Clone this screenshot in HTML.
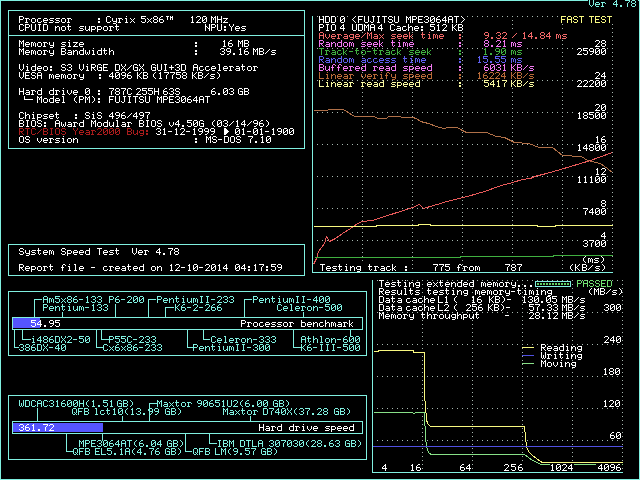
<!DOCTYPE html><html><head><meta charset="utf-8"><style>html,body{margin:0;padding:0;background:#000;width:640px;height:480px;overflow:hidden}svg{display:block;will-change:transform}text{font-family:"Liberation Mono",monospace;white-space:pre}</style></head><body>
<svg width="640" height="480" viewBox="0 0 640 480">
<rect x="0" y="0" width="640" height="480" fill="#000"/>
<path d="M312 16h1v1h-1zM317 16h1v1h-1zM322 16h1v1h-1zM327 16h1v1h-1zM332 16h1v1h-1zM337 16h1v1h-1zM342 16h1v1h-1zM347 16h1v1h-1zM352 16h1v1h-1zM357 16h1v1h-1zM362 16h1v1h-1zM367 16h1v1h-1zM372 16h1v1h-1zM377 16h1v1h-1zM382 16h1v1h-1zM387 16h1v1h-1zM392 16h1v1h-1zM397 16h1v1h-1zM402 16h1v1h-1zM407 16h1v1h-1zM412 16h1v1h-1zM417 16h1v1h-1zM422 16h1v1h-1zM427 16h1v1h-1zM432 16h1v1h-1zM437 16h1v1h-1zM442 16h1v1h-1zM447 16h1v1h-1zM452 16h1v1h-1zM457 16h1v1h-1zM462 16h1v1h-1zM467 16h1v1h-1zM472 16h1v1h-1zM477 16h1v1h-1zM482 16h1v1h-1zM487 16h1v1h-1zM492 16h1v1h-1zM497 16h1v1h-1zM502 16h1v1h-1zM507 16h1v1h-1zM512 16h1v1h-1zM517 16h1v1h-1zM522 16h1v1h-1zM527 16h1v1h-1zM532 16h1v1h-1zM537 16h1v1h-1zM542 16h1v1h-1zM547 16h1v1h-1zM552 16h1v1h-1zM557 16h1v1h-1zM562 16h1v1h-1zM567 16h1v1h-1zM572 16h1v1h-1zM577 16h1v1h-1zM582 16h1v1h-1zM587 16h1v1h-1zM592 16h1v1h-1zM597 16h1v1h-1zM602 16h1v1h-1zM607 16h1v1h-1zM612 16h1v1h-1zM312 48h1v1h-1zM317 48h1v1h-1zM322 48h1v1h-1zM327 48h1v1h-1zM332 48h1v1h-1zM337 48h1v1h-1zM342 48h1v1h-1zM347 48h1v1h-1zM352 48h1v1h-1zM357 48h1v1h-1zM362 48h1v1h-1zM367 48h1v1h-1zM372 48h1v1h-1zM377 48h1v1h-1zM382 48h1v1h-1zM387 48h1v1h-1zM392 48h1v1h-1zM397 48h1v1h-1zM402 48h1v1h-1zM407 48h1v1h-1zM412 48h1v1h-1zM417 48h1v1h-1zM422 48h1v1h-1zM427 48h1v1h-1zM432 48h1v1h-1zM437 48h1v1h-1zM442 48h1v1h-1zM447 48h1v1h-1zM452 48h1v1h-1zM457 48h1v1h-1zM462 48h1v1h-1zM467 48h1v1h-1zM472 48h1v1h-1zM477 48h1v1h-1zM482 48h1v1h-1zM487 48h1v1h-1zM492 48h1v1h-1zM497 48h1v1h-1zM502 48h1v1h-1zM507 48h1v1h-1zM512 48h1v1h-1zM517 48h1v1h-1zM522 48h1v1h-1zM527 48h1v1h-1zM532 48h1v1h-1zM537 48h1v1h-1zM542 48h1v1h-1zM547 48h1v1h-1zM552 48h1v1h-1zM557 48h1v1h-1zM562 48h1v1h-1zM567 48h1v1h-1zM572 48h1v1h-1zM577 48h1v1h-1zM582 48h1v1h-1zM587 48h1v1h-1zM592 48h1v1h-1zM597 48h1v1h-1zM602 48h1v1h-1zM607 48h1v1h-1zM612 48h1v1h-1zM312 80h1v1h-1zM317 80h1v1h-1zM322 80h1v1h-1zM327 80h1v1h-1zM332 80h1v1h-1zM337 80h1v1h-1zM342 80h1v1h-1zM347 80h1v1h-1zM352 80h1v1h-1zM357 80h1v1h-1zM362 80h1v1h-1zM367 80h1v1h-1zM372 80h1v1h-1zM377 80h1v1h-1zM382 80h1v1h-1zM387 80h1v1h-1zM392 80h1v1h-1zM397 80h1v1h-1zM402 80h1v1h-1zM407 80h1v1h-1zM412 80h1v1h-1zM417 80h1v1h-1zM422 80h1v1h-1zM427 80h1v1h-1zM432 80h1v1h-1zM437 80h1v1h-1zM442 80h1v1h-1zM447 80h1v1h-1zM452 80h1v1h-1zM457 80h1v1h-1zM462 80h1v1h-1zM467 80h1v1h-1zM472 80h1v1h-1zM477 80h1v1h-1zM482 80h1v1h-1zM487 80h1v1h-1zM492 80h1v1h-1zM497 80h1v1h-1zM502 80h1v1h-1zM507 80h1v1h-1zM512 80h1v1h-1zM517 80h1v1h-1zM522 80h1v1h-1zM527 80h1v1h-1zM532 80h1v1h-1zM537 80h1v1h-1zM542 80h1v1h-1zM547 80h1v1h-1zM552 80h1v1h-1zM557 80h1v1h-1zM562 80h1v1h-1zM567 80h1v1h-1zM572 80h1v1h-1zM577 80h1v1h-1zM582 80h1v1h-1zM587 80h1v1h-1zM592 80h1v1h-1zM597 80h1v1h-1zM602 80h1v1h-1zM607 80h1v1h-1zM612 80h1v1h-1zM312 112h1v1h-1zM317 112h1v1h-1zM322 112h1v1h-1zM327 112h1v1h-1zM332 112h1v1h-1zM337 112h1v1h-1zM342 112h1v1h-1zM347 112h1v1h-1zM352 112h1v1h-1zM357 112h1v1h-1zM362 112h1v1h-1zM367 112h1v1h-1zM372 112h1v1h-1zM377 112h1v1h-1zM382 112h1v1h-1zM387 112h1v1h-1zM392 112h1v1h-1zM397 112h1v1h-1zM402 112h1v1h-1zM407 112h1v1h-1zM412 112h1v1h-1zM417 112h1v1h-1zM422 112h1v1h-1zM427 112h1v1h-1zM432 112h1v1h-1zM437 112h1v1h-1zM442 112h1v1h-1zM447 112h1v1h-1zM452 112h1v1h-1zM457 112h1v1h-1zM462 112h1v1h-1zM467 112h1v1h-1zM472 112h1v1h-1zM477 112h1v1h-1zM482 112h1v1h-1zM487 112h1v1h-1zM492 112h1v1h-1zM497 112h1v1h-1zM502 112h1v1h-1zM507 112h1v1h-1zM512 112h1v1h-1zM517 112h1v1h-1zM522 112h1v1h-1zM527 112h1v1h-1zM532 112h1v1h-1zM537 112h1v1h-1zM542 112h1v1h-1zM547 112h1v1h-1zM552 112h1v1h-1zM557 112h1v1h-1zM562 112h1v1h-1zM567 112h1v1h-1zM572 112h1v1h-1zM577 112h1v1h-1zM582 112h1v1h-1zM587 112h1v1h-1zM592 112h1v1h-1zM597 112h1v1h-1zM602 112h1v1h-1zM607 112h1v1h-1zM612 112h1v1h-1zM312 144h1v1h-1zM317 144h1v1h-1zM322 144h1v1h-1zM327 144h1v1h-1zM332 144h1v1h-1zM337 144h1v1h-1zM342 144h1v1h-1zM347 144h1v1h-1zM352 144h1v1h-1zM357 144h1v1h-1zM362 144h1v1h-1zM367 144h1v1h-1zM372 144h1v1h-1zM377 144h1v1h-1zM382 144h1v1h-1zM387 144h1v1h-1zM392 144h1v1h-1zM397 144h1v1h-1zM402 144h1v1h-1zM407 144h1v1h-1zM412 144h1v1h-1zM417 144h1v1h-1zM422 144h1v1h-1zM427 144h1v1h-1zM432 144h1v1h-1zM437 144h1v1h-1zM442 144h1v1h-1zM447 144h1v1h-1zM452 144h1v1h-1zM457 144h1v1h-1zM462 144h1v1h-1zM467 144h1v1h-1zM472 144h1v1h-1zM477 144h1v1h-1zM482 144h1v1h-1zM487 144h1v1h-1zM492 144h1v1h-1zM497 144h1v1h-1zM502 144h1v1h-1zM507 144h1v1h-1zM512 144h1v1h-1zM517 144h1v1h-1zM522 144h1v1h-1zM527 144h1v1h-1zM532 144h1v1h-1zM537 144h1v1h-1zM542 144h1v1h-1zM547 144h1v1h-1zM552 144h1v1h-1zM557 144h1v1h-1zM562 144h1v1h-1zM567 144h1v1h-1zM572 144h1v1h-1zM577 144h1v1h-1zM582 144h1v1h-1zM587 144h1v1h-1zM592 144h1v1h-1zM597 144h1v1h-1zM602 144h1v1h-1zM607 144h1v1h-1zM612 144h1v1h-1zM312 176h1v1h-1zM317 176h1v1h-1zM322 176h1v1h-1zM327 176h1v1h-1zM332 176h1v1h-1zM337 176h1v1h-1zM342 176h1v1h-1zM347 176h1v1h-1zM352 176h1v1h-1zM357 176h1v1h-1zM362 176h1v1h-1zM367 176h1v1h-1zM372 176h1v1h-1zM377 176h1v1h-1zM382 176h1v1h-1zM387 176h1v1h-1zM392 176h1v1h-1zM397 176h1v1h-1zM402 176h1v1h-1zM407 176h1v1h-1zM412 176h1v1h-1zM417 176h1v1h-1zM422 176h1v1h-1zM427 176h1v1h-1zM432 176h1v1h-1zM437 176h1v1h-1zM442 176h1v1h-1zM447 176h1v1h-1zM452 176h1v1h-1zM457 176h1v1h-1zM462 176h1v1h-1zM467 176h1v1h-1zM472 176h1v1h-1zM477 176h1v1h-1zM482 176h1v1h-1zM487 176h1v1h-1zM492 176h1v1h-1zM497 176h1v1h-1zM502 176h1v1h-1zM507 176h1v1h-1zM512 176h1v1h-1zM517 176h1v1h-1zM522 176h1v1h-1zM527 176h1v1h-1zM532 176h1v1h-1zM537 176h1v1h-1zM542 176h1v1h-1zM547 176h1v1h-1zM552 176h1v1h-1zM557 176h1v1h-1zM562 176h1v1h-1zM567 176h1v1h-1zM572 176h1v1h-1zM577 176h1v1h-1zM582 176h1v1h-1zM587 176h1v1h-1zM592 176h1v1h-1zM597 176h1v1h-1zM602 176h1v1h-1zM607 176h1v1h-1zM612 176h1v1h-1zM312 208h1v1h-1zM317 208h1v1h-1zM322 208h1v1h-1zM327 208h1v1h-1zM332 208h1v1h-1zM337 208h1v1h-1zM342 208h1v1h-1zM347 208h1v1h-1zM352 208h1v1h-1zM357 208h1v1h-1zM362 208h1v1h-1zM367 208h1v1h-1zM372 208h1v1h-1zM377 208h1v1h-1zM382 208h1v1h-1zM387 208h1v1h-1zM392 208h1v1h-1zM397 208h1v1h-1zM402 208h1v1h-1zM407 208h1v1h-1zM412 208h1v1h-1zM417 208h1v1h-1zM422 208h1v1h-1zM427 208h1v1h-1zM432 208h1v1h-1zM437 208h1v1h-1zM442 208h1v1h-1zM447 208h1v1h-1zM452 208h1v1h-1zM457 208h1v1h-1zM462 208h1v1h-1zM467 208h1v1h-1zM472 208h1v1h-1zM477 208h1v1h-1zM482 208h1v1h-1zM487 208h1v1h-1zM492 208h1v1h-1zM497 208h1v1h-1zM502 208h1v1h-1zM507 208h1v1h-1zM512 208h1v1h-1zM517 208h1v1h-1zM522 208h1v1h-1zM527 208h1v1h-1zM532 208h1v1h-1zM537 208h1v1h-1zM542 208h1v1h-1zM547 208h1v1h-1zM552 208h1v1h-1zM557 208h1v1h-1zM562 208h1v1h-1zM567 208h1v1h-1zM572 208h1v1h-1zM577 208h1v1h-1zM582 208h1v1h-1zM587 208h1v1h-1zM592 208h1v1h-1zM597 208h1v1h-1zM602 208h1v1h-1zM607 208h1v1h-1zM612 208h1v1h-1zM312 240h1v1h-1zM317 240h1v1h-1zM322 240h1v1h-1zM327 240h1v1h-1zM332 240h1v1h-1zM337 240h1v1h-1zM342 240h1v1h-1zM347 240h1v1h-1zM352 240h1v1h-1zM357 240h1v1h-1zM362 240h1v1h-1zM367 240h1v1h-1zM372 240h1v1h-1zM377 240h1v1h-1zM382 240h1v1h-1zM387 240h1v1h-1zM392 240h1v1h-1zM397 240h1v1h-1zM402 240h1v1h-1zM407 240h1v1h-1zM412 240h1v1h-1zM417 240h1v1h-1zM422 240h1v1h-1zM427 240h1v1h-1zM432 240h1v1h-1zM437 240h1v1h-1zM442 240h1v1h-1zM447 240h1v1h-1zM452 240h1v1h-1zM457 240h1v1h-1zM462 240h1v1h-1zM467 240h1v1h-1zM472 240h1v1h-1zM477 240h1v1h-1zM482 240h1v1h-1zM487 240h1v1h-1zM492 240h1v1h-1zM497 240h1v1h-1zM502 240h1v1h-1zM507 240h1v1h-1zM512 240h1v1h-1zM517 240h1v1h-1zM522 240h1v1h-1zM527 240h1v1h-1zM532 240h1v1h-1zM537 240h1v1h-1zM542 240h1v1h-1zM547 240h1v1h-1zM552 240h1v1h-1zM557 240h1v1h-1zM562 240h1v1h-1zM567 240h1v1h-1zM572 240h1v1h-1zM577 240h1v1h-1zM582 240h1v1h-1zM587 240h1v1h-1zM592 240h1v1h-1zM597 240h1v1h-1zM602 240h1v1h-1zM607 240h1v1h-1zM612 240h1v1h-1zM362 16h1v1h-1zM362 20h1v1h-1zM362 24h1v1h-1zM362 28h1v1h-1zM362 32h1v1h-1zM362 36h1v1h-1zM362 40h1v1h-1zM362 44h1v1h-1zM362 48h1v1h-1zM362 52h1v1h-1zM362 56h1v1h-1zM362 60h1v1h-1zM362 64h1v1h-1zM362 68h1v1h-1zM362 72h1v1h-1zM362 76h1v1h-1zM362 80h1v1h-1zM362 84h1v1h-1zM362 88h1v1h-1zM362 92h1v1h-1zM362 96h1v1h-1zM362 100h1v1h-1zM362 104h1v1h-1zM362 108h1v1h-1zM362 112h1v1h-1zM362 116h1v1h-1zM362 120h1v1h-1zM362 124h1v1h-1zM362 128h1v1h-1zM362 132h1v1h-1zM362 136h1v1h-1zM362 140h1v1h-1zM362 144h1v1h-1zM362 148h1v1h-1zM362 152h1v1h-1zM362 156h1v1h-1zM362 160h1v1h-1zM362 164h1v1h-1zM362 168h1v1h-1zM362 172h1v1h-1zM362 176h1v1h-1zM362 180h1v1h-1zM362 184h1v1h-1zM362 188h1v1h-1zM362 192h1v1h-1zM362 196h1v1h-1zM362 200h1v1h-1zM362 204h1v1h-1zM362 208h1v1h-1zM362 212h1v1h-1zM362 216h1v1h-1zM362 220h1v1h-1zM362 224h1v1h-1zM362 228h1v1h-1zM362 232h1v1h-1zM362 236h1v1h-1zM362 240h1v1h-1zM362 244h1v1h-1zM362 248h1v1h-1zM362 252h1v1h-1zM362 256h1v1h-1zM362 260h1v1h-1zM362 264h1v1h-1zM362 268h1v1h-1zM412 16h1v1h-1zM412 20h1v1h-1zM412 24h1v1h-1zM412 28h1v1h-1zM412 32h1v1h-1zM412 36h1v1h-1zM412 40h1v1h-1zM412 44h1v1h-1zM412 48h1v1h-1zM412 52h1v1h-1zM412 56h1v1h-1zM412 60h1v1h-1zM412 64h1v1h-1zM412 68h1v1h-1zM412 72h1v1h-1zM412 76h1v1h-1zM412 80h1v1h-1zM412 84h1v1h-1zM412 88h1v1h-1zM412 92h1v1h-1zM412 96h1v1h-1zM412 100h1v1h-1zM412 104h1v1h-1zM412 108h1v1h-1zM412 112h1v1h-1zM412 116h1v1h-1zM412 120h1v1h-1zM412 124h1v1h-1zM412 128h1v1h-1zM412 132h1v1h-1zM412 136h1v1h-1zM412 140h1v1h-1zM412 144h1v1h-1zM412 148h1v1h-1zM412 152h1v1h-1zM412 156h1v1h-1zM412 160h1v1h-1zM412 164h1v1h-1zM412 168h1v1h-1zM412 172h1v1h-1zM412 176h1v1h-1zM412 180h1v1h-1zM412 184h1v1h-1zM412 188h1v1h-1zM412 192h1v1h-1zM412 196h1v1h-1zM412 200h1v1h-1zM412 204h1v1h-1zM412 208h1v1h-1zM412 212h1v1h-1zM412 216h1v1h-1zM412 220h1v1h-1zM412 224h1v1h-1zM412 228h1v1h-1zM412 232h1v1h-1zM412 236h1v1h-1zM412 240h1v1h-1zM412 244h1v1h-1zM412 248h1v1h-1zM412 252h1v1h-1zM412 256h1v1h-1zM412 260h1v1h-1zM412 264h1v1h-1zM412 268h1v1h-1zM462 16h1v1h-1zM462 20h1v1h-1zM462 24h1v1h-1zM462 28h1v1h-1zM462 32h1v1h-1zM462 36h1v1h-1zM462 40h1v1h-1zM462 44h1v1h-1zM462 48h1v1h-1zM462 52h1v1h-1zM462 56h1v1h-1zM462 60h1v1h-1zM462 64h1v1h-1zM462 68h1v1h-1zM462 72h1v1h-1zM462 76h1v1h-1zM462 80h1v1h-1zM462 84h1v1h-1zM462 88h1v1h-1zM462 92h1v1h-1zM462 96h1v1h-1zM462 100h1v1h-1zM462 104h1v1h-1zM462 108h1v1h-1zM462 112h1v1h-1zM462 116h1v1h-1zM462 120h1v1h-1zM462 124h1v1h-1zM462 128h1v1h-1zM462 132h1v1h-1zM462 136h1v1h-1zM462 140h1v1h-1zM462 144h1v1h-1zM462 148h1v1h-1zM462 152h1v1h-1zM462 156h1v1h-1zM462 160h1v1h-1zM462 164h1v1h-1zM462 168h1v1h-1zM462 172h1v1h-1zM462 176h1v1h-1zM462 180h1v1h-1zM462 184h1v1h-1zM462 188h1v1h-1zM462 192h1v1h-1zM462 196h1v1h-1zM462 200h1v1h-1zM462 204h1v1h-1zM462 208h1v1h-1zM462 212h1v1h-1zM462 216h1v1h-1zM462 220h1v1h-1zM462 224h1v1h-1zM462 228h1v1h-1zM462 232h1v1h-1zM462 236h1v1h-1zM462 240h1v1h-1zM462 244h1v1h-1zM462 248h1v1h-1zM462 252h1v1h-1zM462 256h1v1h-1zM462 260h1v1h-1zM462 264h1v1h-1zM462 268h1v1h-1zM512 16h1v1h-1zM512 20h1v1h-1zM512 24h1v1h-1zM512 28h1v1h-1zM512 32h1v1h-1zM512 36h1v1h-1zM512 40h1v1h-1zM512 44h1v1h-1zM512 48h1v1h-1zM512 52h1v1h-1zM512 56h1v1h-1zM512 60h1v1h-1zM512 64h1v1h-1zM512 68h1v1h-1zM512 72h1v1h-1zM512 76h1v1h-1zM512 80h1v1h-1zM512 84h1v1h-1zM512 88h1v1h-1zM512 92h1v1h-1zM512 96h1v1h-1zM512 100h1v1h-1zM512 104h1v1h-1zM512 108h1v1h-1zM512 112h1v1h-1zM512 116h1v1h-1zM512 120h1v1h-1zM512 124h1v1h-1zM512 128h1v1h-1zM512 132h1v1h-1zM512 136h1v1h-1zM512 140h1v1h-1zM512 144h1v1h-1zM512 148h1v1h-1zM512 152h1v1h-1zM512 156h1v1h-1zM512 160h1v1h-1zM512 164h1v1h-1zM512 168h1v1h-1zM512 172h1v1h-1zM512 176h1v1h-1zM512 180h1v1h-1zM512 184h1v1h-1zM512 188h1v1h-1zM512 192h1v1h-1zM512 196h1v1h-1zM512 200h1v1h-1zM512 204h1v1h-1zM512 208h1v1h-1zM512 212h1v1h-1zM512 216h1v1h-1zM512 220h1v1h-1zM512 224h1v1h-1zM512 228h1v1h-1zM512 232h1v1h-1zM512 236h1v1h-1zM512 240h1v1h-1zM512 244h1v1h-1zM512 248h1v1h-1zM512 252h1v1h-1zM512 256h1v1h-1zM512 260h1v1h-1zM512 264h1v1h-1zM512 268h1v1h-1zM562 16h1v1h-1zM562 20h1v1h-1zM562 24h1v1h-1zM562 28h1v1h-1zM562 32h1v1h-1zM562 36h1v1h-1zM562 40h1v1h-1zM562 44h1v1h-1zM562 48h1v1h-1zM562 52h1v1h-1zM562 56h1v1h-1zM562 60h1v1h-1zM562 64h1v1h-1zM562 68h1v1h-1zM562 72h1v1h-1zM562 76h1v1h-1zM562 80h1v1h-1zM562 84h1v1h-1zM562 88h1v1h-1zM562 92h1v1h-1zM562 96h1v1h-1zM562 100h1v1h-1zM562 104h1v1h-1zM562 108h1v1h-1zM562 112h1v1h-1zM562 116h1v1h-1zM562 120h1v1h-1zM562 124h1v1h-1zM562 128h1v1h-1zM562 132h1v1h-1zM562 136h1v1h-1zM562 140h1v1h-1zM562 144h1v1h-1zM562 148h1v1h-1zM562 152h1v1h-1zM562 156h1v1h-1zM562 160h1v1h-1zM562 164h1v1h-1zM562 168h1v1h-1zM562 172h1v1h-1zM562 176h1v1h-1zM562 180h1v1h-1zM562 184h1v1h-1zM562 188h1v1h-1zM562 192h1v1h-1zM562 196h1v1h-1zM562 200h1v1h-1zM562 204h1v1h-1zM562 208h1v1h-1zM562 212h1v1h-1zM562 216h1v1h-1zM562 220h1v1h-1zM562 224h1v1h-1zM562 228h1v1h-1zM562 232h1v1h-1zM562 236h1v1h-1zM562 240h1v1h-1zM562 244h1v1h-1zM562 248h1v1h-1zM562 252h1v1h-1zM562 256h1v1h-1zM562 260h1v1h-1zM562 264h1v1h-1zM562 268h1v1h-1zM612 16h1v1h-1zM612 20h1v1h-1zM612 24h1v1h-1zM612 28h1v1h-1zM612 32h1v1h-1zM612 36h1v1h-1zM612 40h1v1h-1zM612 44h1v1h-1zM612 48h1v1h-1zM612 52h1v1h-1zM612 56h1v1h-1zM612 60h1v1h-1zM612 64h1v1h-1zM612 68h1v1h-1zM612 72h1v1h-1zM612 76h1v1h-1zM612 80h1v1h-1zM612 84h1v1h-1zM612 88h1v1h-1zM612 92h1v1h-1zM612 96h1v1h-1zM612 100h1v1h-1zM612 104h1v1h-1zM612 108h1v1h-1zM612 112h1v1h-1zM612 116h1v1h-1zM612 120h1v1h-1zM612 124h1v1h-1zM612 128h1v1h-1zM612 132h1v1h-1zM612 136h1v1h-1zM612 140h1v1h-1zM612 144h1v1h-1zM612 148h1v1h-1zM612 152h1v1h-1zM612 156h1v1h-1zM612 160h1v1h-1zM612 164h1v1h-1zM612 168h1v1h-1zM612 172h1v1h-1zM612 176h1v1h-1zM612 180h1v1h-1zM612 184h1v1h-1zM612 188h1v1h-1zM612 192h1v1h-1zM612 196h1v1h-1zM612 200h1v1h-1zM612 204h1v1h-1zM612 208h1v1h-1zM612 212h1v1h-1zM612 216h1v1h-1zM612 220h1v1h-1zM612 224h1v1h-1zM612 228h1v1h-1zM612 232h1v1h-1zM612 236h1v1h-1zM612 240h1v1h-1zM612 244h1v1h-1zM612 248h1v1h-1zM612 252h1v1h-1zM612 256h1v1h-1zM612 260h1v1h-1zM612 264h1v1h-1zM612 268h1v1h-1zM372 280h1v1h-1zM377 280h1v1h-1zM382 280h1v1h-1zM387 280h1v1h-1zM392 280h1v1h-1zM397 280h1v1h-1zM402 280h1v1h-1zM407 280h1v1h-1zM412 280h1v1h-1zM417 280h1v1h-1zM422 280h1v1h-1zM427 280h1v1h-1zM432 280h1v1h-1zM437 280h1v1h-1zM442 280h1v1h-1zM447 280h1v1h-1zM452 280h1v1h-1zM457 280h1v1h-1zM462 280h1v1h-1zM467 280h1v1h-1zM472 280h1v1h-1zM477 280h1v1h-1zM482 280h1v1h-1zM487 280h1v1h-1zM492 280h1v1h-1zM497 280h1v1h-1zM502 280h1v1h-1zM507 280h1v1h-1zM512 280h1v1h-1zM517 280h1v1h-1zM522 280h1v1h-1zM527 280h1v1h-1zM532 280h1v1h-1zM537 280h1v1h-1zM542 280h1v1h-1zM547 280h1v1h-1zM552 280h1v1h-1zM557 280h1v1h-1zM562 280h1v1h-1zM567 280h1v1h-1zM572 280h1v1h-1zM577 280h1v1h-1zM582 280h1v1h-1zM587 280h1v1h-1zM592 280h1v1h-1zM597 280h1v1h-1zM602 280h1v1h-1zM607 280h1v1h-1zM612 280h1v1h-1zM617 280h1v1h-1zM622 280h1v1h-1zM372 312h1v1h-1zM377 312h1v1h-1zM382 312h1v1h-1zM387 312h1v1h-1zM392 312h1v1h-1zM397 312h1v1h-1zM402 312h1v1h-1zM407 312h1v1h-1zM412 312h1v1h-1zM417 312h1v1h-1zM422 312h1v1h-1zM427 312h1v1h-1zM432 312h1v1h-1zM437 312h1v1h-1zM442 312h1v1h-1zM447 312h1v1h-1zM452 312h1v1h-1zM457 312h1v1h-1zM462 312h1v1h-1zM467 312h1v1h-1zM472 312h1v1h-1zM477 312h1v1h-1zM482 312h1v1h-1zM487 312h1v1h-1zM492 312h1v1h-1zM497 312h1v1h-1zM502 312h1v1h-1zM507 312h1v1h-1zM512 312h1v1h-1zM517 312h1v1h-1zM522 312h1v1h-1zM527 312h1v1h-1zM532 312h1v1h-1zM537 312h1v1h-1zM542 312h1v1h-1zM547 312h1v1h-1zM552 312h1v1h-1zM557 312h1v1h-1zM562 312h1v1h-1zM567 312h1v1h-1zM572 312h1v1h-1zM577 312h1v1h-1zM582 312h1v1h-1zM587 312h1v1h-1zM592 312h1v1h-1zM597 312h1v1h-1zM602 312h1v1h-1zM607 312h1v1h-1zM612 312h1v1h-1zM617 312h1v1h-1zM622 312h1v1h-1zM372 344h1v1h-1zM377 344h1v1h-1zM382 344h1v1h-1zM387 344h1v1h-1zM392 344h1v1h-1zM397 344h1v1h-1zM402 344h1v1h-1zM407 344h1v1h-1zM412 344h1v1h-1zM417 344h1v1h-1zM422 344h1v1h-1zM427 344h1v1h-1zM432 344h1v1h-1zM437 344h1v1h-1zM442 344h1v1h-1zM447 344h1v1h-1zM452 344h1v1h-1zM457 344h1v1h-1zM462 344h1v1h-1zM467 344h1v1h-1zM472 344h1v1h-1zM477 344h1v1h-1zM482 344h1v1h-1zM487 344h1v1h-1zM492 344h1v1h-1zM497 344h1v1h-1zM502 344h1v1h-1zM507 344h1v1h-1zM512 344h1v1h-1zM517 344h1v1h-1zM522 344h1v1h-1zM527 344h1v1h-1zM532 344h1v1h-1zM537 344h1v1h-1zM542 344h1v1h-1zM547 344h1v1h-1zM552 344h1v1h-1zM557 344h1v1h-1zM562 344h1v1h-1zM567 344h1v1h-1zM572 344h1v1h-1zM577 344h1v1h-1zM582 344h1v1h-1zM587 344h1v1h-1zM592 344h1v1h-1zM597 344h1v1h-1zM602 344h1v1h-1zM607 344h1v1h-1zM612 344h1v1h-1zM617 344h1v1h-1zM622 344h1v1h-1zM372 376h1v1h-1zM377 376h1v1h-1zM382 376h1v1h-1zM387 376h1v1h-1zM392 376h1v1h-1zM397 376h1v1h-1zM402 376h1v1h-1zM407 376h1v1h-1zM412 376h1v1h-1zM417 376h1v1h-1zM422 376h1v1h-1zM427 376h1v1h-1zM432 376h1v1h-1zM437 376h1v1h-1zM442 376h1v1h-1zM447 376h1v1h-1zM452 376h1v1h-1zM457 376h1v1h-1zM462 376h1v1h-1zM467 376h1v1h-1zM472 376h1v1h-1zM477 376h1v1h-1zM482 376h1v1h-1zM487 376h1v1h-1zM492 376h1v1h-1zM497 376h1v1h-1zM502 376h1v1h-1zM507 376h1v1h-1zM512 376h1v1h-1zM517 376h1v1h-1zM522 376h1v1h-1zM527 376h1v1h-1zM532 376h1v1h-1zM537 376h1v1h-1zM542 376h1v1h-1zM547 376h1v1h-1zM552 376h1v1h-1zM557 376h1v1h-1zM562 376h1v1h-1zM567 376h1v1h-1zM572 376h1v1h-1zM577 376h1v1h-1zM582 376h1v1h-1zM587 376h1v1h-1zM592 376h1v1h-1zM597 376h1v1h-1zM602 376h1v1h-1zM607 376h1v1h-1zM612 376h1v1h-1zM617 376h1v1h-1zM622 376h1v1h-1zM372 408h1v1h-1zM377 408h1v1h-1zM382 408h1v1h-1zM387 408h1v1h-1zM392 408h1v1h-1zM397 408h1v1h-1zM402 408h1v1h-1zM407 408h1v1h-1zM412 408h1v1h-1zM417 408h1v1h-1zM422 408h1v1h-1zM427 408h1v1h-1zM432 408h1v1h-1zM437 408h1v1h-1zM442 408h1v1h-1zM447 408h1v1h-1zM452 408h1v1h-1zM457 408h1v1h-1zM462 408h1v1h-1zM467 408h1v1h-1zM472 408h1v1h-1zM477 408h1v1h-1zM482 408h1v1h-1zM487 408h1v1h-1zM492 408h1v1h-1zM497 408h1v1h-1zM502 408h1v1h-1zM507 408h1v1h-1zM512 408h1v1h-1zM517 408h1v1h-1zM522 408h1v1h-1zM527 408h1v1h-1zM532 408h1v1h-1zM537 408h1v1h-1zM542 408h1v1h-1zM547 408h1v1h-1zM552 408h1v1h-1zM557 408h1v1h-1zM562 408h1v1h-1zM567 408h1v1h-1zM572 408h1v1h-1zM577 408h1v1h-1zM582 408h1v1h-1zM587 408h1v1h-1zM592 408h1v1h-1zM597 408h1v1h-1zM602 408h1v1h-1zM607 408h1v1h-1zM612 408h1v1h-1zM617 408h1v1h-1zM622 408h1v1h-1zM372 440h1v1h-1zM377 440h1v1h-1zM382 440h1v1h-1zM387 440h1v1h-1zM392 440h1v1h-1zM397 440h1v1h-1zM402 440h1v1h-1zM407 440h1v1h-1zM412 440h1v1h-1zM417 440h1v1h-1zM422 440h1v1h-1zM427 440h1v1h-1zM432 440h1v1h-1zM437 440h1v1h-1zM442 440h1v1h-1zM447 440h1v1h-1zM452 440h1v1h-1zM457 440h1v1h-1zM462 440h1v1h-1zM467 440h1v1h-1zM472 440h1v1h-1zM477 440h1v1h-1zM482 440h1v1h-1zM487 440h1v1h-1zM492 440h1v1h-1zM497 440h1v1h-1zM502 440h1v1h-1zM507 440h1v1h-1zM512 440h1v1h-1zM517 440h1v1h-1zM522 440h1v1h-1zM527 440h1v1h-1zM532 440h1v1h-1zM537 440h1v1h-1zM542 440h1v1h-1zM547 440h1v1h-1zM552 440h1v1h-1zM557 440h1v1h-1zM562 440h1v1h-1zM567 440h1v1h-1zM572 440h1v1h-1zM577 440h1v1h-1zM582 440h1v1h-1zM587 440h1v1h-1zM592 440h1v1h-1zM597 440h1v1h-1zM602 440h1v1h-1zM607 440h1v1h-1zM612 440h1v1h-1zM617 440h1v1h-1zM622 440h1v1h-1zM422 280h1v1h-1zM422 284h1v1h-1zM422 288h1v1h-1zM422 292h1v1h-1zM422 296h1v1h-1zM422 300h1v1h-1zM422 304h1v1h-1zM422 308h1v1h-1zM422 312h1v1h-1zM422 316h1v1h-1zM422 320h1v1h-1zM422 324h1v1h-1zM422 328h1v1h-1zM422 332h1v1h-1zM422 336h1v1h-1zM422 340h1v1h-1zM422 344h1v1h-1zM422 348h1v1h-1zM422 352h1v1h-1zM422 356h1v1h-1zM422 360h1v1h-1zM422 364h1v1h-1zM422 368h1v1h-1zM422 372h1v1h-1zM422 376h1v1h-1zM422 380h1v1h-1zM422 384h1v1h-1zM422 388h1v1h-1zM422 392h1v1h-1zM422 396h1v1h-1zM422 400h1v1h-1zM422 404h1v1h-1zM422 408h1v1h-1zM422 412h1v1h-1zM422 416h1v1h-1zM422 420h1v1h-1zM422 424h1v1h-1zM422 428h1v1h-1zM422 432h1v1h-1zM422 436h1v1h-1zM422 440h1v1h-1zM422 444h1v1h-1zM422 448h1v1h-1zM422 452h1v1h-1zM422 456h1v1h-1zM422 460h1v1h-1zM422 464h1v1h-1zM422 468h1v1h-1zM472 280h1v1h-1zM472 284h1v1h-1zM472 288h1v1h-1zM472 292h1v1h-1zM472 296h1v1h-1zM472 300h1v1h-1zM472 304h1v1h-1zM472 308h1v1h-1zM472 312h1v1h-1zM472 316h1v1h-1zM472 320h1v1h-1zM472 324h1v1h-1zM472 328h1v1h-1zM472 332h1v1h-1zM472 336h1v1h-1zM472 340h1v1h-1zM472 344h1v1h-1zM472 348h1v1h-1zM472 352h1v1h-1zM472 356h1v1h-1zM472 360h1v1h-1zM472 364h1v1h-1zM472 368h1v1h-1zM472 372h1v1h-1zM472 376h1v1h-1zM472 380h1v1h-1zM472 384h1v1h-1zM472 388h1v1h-1zM472 392h1v1h-1zM472 396h1v1h-1zM472 400h1v1h-1zM472 404h1v1h-1zM472 408h1v1h-1zM472 412h1v1h-1zM472 416h1v1h-1zM472 420h1v1h-1zM472 424h1v1h-1zM472 428h1v1h-1zM472 432h1v1h-1zM472 436h1v1h-1zM472 440h1v1h-1zM472 444h1v1h-1zM472 448h1v1h-1zM472 452h1v1h-1zM472 456h1v1h-1zM472 460h1v1h-1zM472 464h1v1h-1zM472 468h1v1h-1zM522 280h1v1h-1zM522 284h1v1h-1zM522 288h1v1h-1zM522 292h1v1h-1zM522 296h1v1h-1zM522 300h1v1h-1zM522 304h1v1h-1zM522 308h1v1h-1zM522 312h1v1h-1zM522 316h1v1h-1zM522 320h1v1h-1zM522 324h1v1h-1zM522 328h1v1h-1zM522 332h1v1h-1zM522 336h1v1h-1zM522 340h1v1h-1zM522 344h1v1h-1zM522 348h1v1h-1zM522 352h1v1h-1zM522 356h1v1h-1zM522 360h1v1h-1zM522 364h1v1h-1zM522 368h1v1h-1zM522 372h1v1h-1zM522 376h1v1h-1zM522 380h1v1h-1zM522 384h1v1h-1zM522 388h1v1h-1zM522 392h1v1h-1zM522 396h1v1h-1zM522 400h1v1h-1zM522 404h1v1h-1zM522 408h1v1h-1zM522 412h1v1h-1zM522 416h1v1h-1zM522 420h1v1h-1zM522 424h1v1h-1zM522 428h1v1h-1zM522 432h1v1h-1zM522 436h1v1h-1zM522 440h1v1h-1zM522 444h1v1h-1zM522 448h1v1h-1zM522 452h1v1h-1zM522 456h1v1h-1zM522 460h1v1h-1zM522 464h1v1h-1zM522 468h1v1h-1zM572 280h1v1h-1zM572 284h1v1h-1zM572 288h1v1h-1zM572 292h1v1h-1zM572 296h1v1h-1zM572 300h1v1h-1zM572 304h1v1h-1zM572 308h1v1h-1zM572 312h1v1h-1zM572 316h1v1h-1zM572 320h1v1h-1zM572 324h1v1h-1zM572 328h1v1h-1zM572 332h1v1h-1zM572 336h1v1h-1zM572 340h1v1h-1zM572 344h1v1h-1zM572 348h1v1h-1zM572 352h1v1h-1zM572 356h1v1h-1zM572 360h1v1h-1zM572 364h1v1h-1zM572 368h1v1h-1zM572 372h1v1h-1zM572 376h1v1h-1zM572 380h1v1h-1zM572 384h1v1h-1zM572 388h1v1h-1zM572 392h1v1h-1zM572 396h1v1h-1zM572 400h1v1h-1zM572 404h1v1h-1zM572 408h1v1h-1zM572 412h1v1h-1zM572 416h1v1h-1zM572 420h1v1h-1zM572 424h1v1h-1zM572 428h1v1h-1zM572 432h1v1h-1zM572 436h1v1h-1zM572 440h1v1h-1zM572 444h1v1h-1zM572 448h1v1h-1zM572 452h1v1h-1zM572 456h1v1h-1zM572 460h1v1h-1zM572 464h1v1h-1zM572 468h1v1h-1zM622 280h1v1h-1zM622 284h1v1h-1zM622 288h1v1h-1zM622 292h1v1h-1zM622 296h1v1h-1zM622 300h1v1h-1zM622 304h1v1h-1zM622 308h1v1h-1zM622 312h1v1h-1zM622 316h1v1h-1zM622 320h1v1h-1zM622 324h1v1h-1zM622 328h1v1h-1zM622 332h1v1h-1zM622 336h1v1h-1zM622 340h1v1h-1zM622 344h1v1h-1zM622 348h1v1h-1zM622 352h1v1h-1zM622 356h1v1h-1zM622 360h1v1h-1zM622 364h1v1h-1zM622 368h1v1h-1zM622 372h1v1h-1zM622 376h1v1h-1zM622 380h1v1h-1zM622 384h1v1h-1zM622 388h1v1h-1zM622 392h1v1h-1zM622 396h1v1h-1zM622 400h1v1h-1zM622 404h1v1h-1zM622 408h1v1h-1zM622 412h1v1h-1zM622 416h1v1h-1zM622 420h1v1h-1zM622 424h1v1h-1zM622 428h1v1h-1zM622 432h1v1h-1zM622 436h1v1h-1zM622 440h1v1h-1zM622 444h1v1h-1zM622 448h1v1h-1zM622 452h1v1h-1zM622 456h1v1h-1zM622 460h1v1h-1zM622 464h1v1h-1zM622 468h1v1h-1z" fill="#A8B8B0" shape-rendering="crispEdges"/>
<polyline points="313.5,110.5 327.5,110.5 328.5,109.5 343.5,109.5 354.5,116.5 374.5,116.5 377.5,118.5 386.5,118.5 388.5,116.5 400.5,116.5 401.5,117.5 412.5,117.5 416.5,118.5 420.5,121.5 428.5,123.5 436.5,126.5 443.5,128.5 448.5,127.5 457.5,127.5 460.5,129.5 466.5,132.5 486.5,132.5 496.5,136.5 504.5,137.5 514.5,142.5 528.5,143.5 539.5,147.5 552.5,147.5 562.5,155.5 581.5,156.5 587.5,160.5 600.5,163.5 612.5,172.5" fill="none" stroke="#B07048" stroke-width="1" shape-rendering="crispEdges"/>
<polyline points="313.5,264.5 316.5,258.5 318.5,251.5 321.5,247.5 324.5,243.5 326.5,236.5 329.5,241.5 335.5,238.5 342.5,233.5 350.5,228.5 357.5,223.5 362.5,221.5 372.5,220.5 412.5,207.5 419.5,204.5 423.5,208.5 450.5,200.5 467.5,196.5 484.5,191.5 501.5,185.5 512.5,182.5 522.5,179.5 530.5,178.5 534.5,176.5 546.5,173.5 560.5,169.5 590.5,160.5 612.5,152.5" fill="none" stroke="#E85A5A" stroke-width="1" shape-rendering="crispEdges"/>
<polyline points="313.5,226.5 376.5,226.5 376.5,225.5 418.5,225.5 418.5,224.5 430.5,224.5 430.5,225.5 537.5,225.5 537.5,226.5 555.5,226.5 555.5,225.5 612.5,225.5" fill="none" stroke="#F8F880" stroke-width="1" shape-rendering="crispEdges"/>
<polyline points="314.5,257.5 460.5,257.5 460.5,256.5 553.5,256.5 553.5,255.5 612.5,255.5" fill="none" stroke="#40B040" stroke-width="1" shape-rendering="crispEdges"/>
<polyline points="373.5,351.5 378.5,351.5 378.5,350.5 413.5,350.5 413.5,352.5 424.5,352.5 424.5,395.5 425.5,405.5 426.5,419.5 427.5,423.5 430.5,426.5 524.5,426.5 525.5,436.5 526.5,446.5 527.5,449.5 529.5,452.5 532.5,455.5 536.5,458.5 540.5,461.5 542.5,462.5 622.5,462.5" fill="none" stroke="#F8F880" stroke-width="1" shape-rendering="crispEdges"/>
<polyline points="373.5,412.5 412.5,412.5 413.5,413.5 414.5,413.5 415.5,412.5 424.5,412.5 425.5,438.5 426.5,445.5 427.5,450.5 429.5,453.5 431.5,454.5 524.5,454.5 528.5,457.5 532.5,460.5 537.5,462.5 540.5,464.5 622.5,464.5" fill="none" stroke="#88E088" stroke-width="1" shape-rendering="crispEdges"/>
<path d="M0 0h588v1h-588zM637 0h3v1h-3zM0 0h1v480h-1zM639 0h1v480h-1zM0 479h640v1h-640zM8 10h297v1h-297zM8 148h297v1h-297zM8 10h1v139h-1zM304 10h1v139h-1zM8 35h297v1h-297zM8 244h297v1h-297zM8 275h297v1h-297zM8 244h1v32h-1zM304 244h1v32h-1zM312 16h1v257h-1zM312 272h301v1h-301zM372 280h1v193h-1zM372 472h251v1h-251zM535 281h36v1h-36zM535 286h36v1h-36zM535 281h1v6h-1zM570 281h1v6h-1zM8 291h359v1h-359zM8 355h359v1h-359zM8 291h1v65h-1zM366 291h1v65h-1zM12 317h351v1h-351zM12 329h351v1h-351zM12 317h1v13h-1zM362 317h1v13h-1zM34 299h1v18h-1zM34 299h8v1h-8zM62 312h1v5h-1zM115 304h1v13h-1zM148 299h1v18h-1zM148 299h8v1h-8zM165 307h1v10h-1zM165 307h9v1h-9zM244 299h1v18h-1zM244 299h8v1h-8zM303 312h1v5h-1zM14 330h1v18h-1zM14 347h5v1h-5zM22 330h1v10h-1zM22 339h9v1h-9zM96 330h1v18h-1zM96 347h7v1h-7zM101 330h1v10h-1zM101 339h8v1h-8zM187 330h1v18h-1zM187 347h6v1h-6zM203 330h1v10h-1zM203 339h7v1h-7zM293 330h1v18h-1zM293 347h8v1h-8zM350 330h1v6h-1zM8 395h359v1h-359zM8 459h359v1h-359zM8 395h1v65h-1zM366 395h1v65h-1zM12 421h351v1h-351zM12 433h351v1h-351zM12 421h1v13h-1zM362 421h1v13h-1zM37 408h1v13h-1zM122 416h1v5h-1zM149 403h1v18h-1zM149 403h8v1h-8zM250 416h1v5h-1zM66 434h1v18h-1zM66 451h7v1h-7zM102 434h1v7h-1zM185 434h1v18h-1zM185 451h7v1h-7zM209 434h1v10h-1zM209 443h8v1h-8z" fill="#80F0E0" shape-rendering="crispEdges"/>
<path d="M24 96h1v4h-1zM24 99h9v1h-9zM224 128h2v1h-2zM224 129h3v1h-3zM224 130h4v1h-4zM224 131h5v1h-5zM224 132h4v1h-4zM224 133h3v1h-3zM224 134h2v1h-2z" fill="#FFFFFF" shape-rendering="crispEdges"/>
<path d="M373 446h250v1h-250zM522 355h12v1h-12z" fill="#5050E0" shape-rendering="crispEdges"/>
<path d="M522 347h12v1h-12z" fill="#F8F880" shape-rendering="crispEdges"/>
<path d="M522 363h12v1h-12z" fill="#88E088" shape-rendering="crispEdges"/>
<path d="M537 283h2v2h-2zM540 283h2v2h-2zM543 283h2v2h-2zM546 283h2v2h-2zM549 283h2v2h-2zM552 283h2v2h-2zM555 283h2v2h-2zM558 283h2v2h-2zM561 283h2v2h-2zM564 283h2v2h-2zM567 283h2v2h-2z" fill="#60D060" shape-rendering="crispEdges"/>
<path d="M13 318h27v10h-27zM13 423h90v9h-90z" fill="#5555FF" shape-rendering="crispEdges"/>
<rect x="550" y="463" width="24" height="8" fill="#000"/>
<rect x="596" y="463" width="26" height="8" fill="#000"/>
<rect x="380" y="463" width="9" height="8" fill="#000"/>
<rect x="408" y="463" width="14" height="8" fill="#000"/>
<rect x="458" y="463" width="14" height="8" fill="#000"/>
<rect x="503" y="463" width="21" height="8" fill="#000"/>
<rect x="588" y="0" width="49" height="8" fill="#000"/>
<rect x="588" y="0" width="50" height="8" fill="#000"/>
<rect x="131" y="248" width="50" height="8" fill="#000"/>
<rect x="318" y="16" width="4" height="8" fill="#000"/>
<rect x="339" y="16" width="4" height="8" fill="#000"/>
<rect x="351" y="16" width="115" height="8" fill="#000"/>
<rect x="560" y="16" width="53" height="8" fill="#000"/>
<rect x="318" y="24" width="4" height="8" fill="#000"/>
<rect x="339" y="24" width="4" height="8" fill="#000"/>
<rect x="351" y="24" width="4" height="8" fill="#000"/>
<rect x="377" y="24" width="4" height="8" fill="#000"/>
<rect x="389" y="24" width="75" height="8" fill="#000"/>
<rect x="458" y="32" width="4" height="8" fill="#000"/>
<rect x="483" y="32" width="85" height="8" fill="#000"/>
<rect x="458" y="40" width="4" height="8" fill="#000"/>
<rect x="483" y="40" width="40" height="8" fill="#000"/>
<rect x="458" y="48" width="4" height="8" fill="#000"/>
<rect x="483" y="48" width="40" height="8" fill="#000"/>
<rect x="458" y="56" width="4" height="8" fill="#000"/>
<rect x="477" y="56" width="46" height="8" fill="#000"/>
<rect x="458" y="64" width="4" height="8" fill="#000"/>
<rect x="483" y="64" width="52" height="8" fill="#000"/>
<rect x="458" y="72" width="4" height="8" fill="#000"/>
<rect x="477" y="72" width="58" height="8" fill="#000"/>
<rect x="458" y="80" width="4" height="8" fill="#000"/>
<rect x="483" y="80" width="52" height="8" fill="#000"/>
<rect x="594" y="40" width="13" height="8" fill="#000"/>
<rect x="576" y="48" width="31" height="8" fill="#000"/>
<rect x="594" y="72" width="13" height="8" fill="#000"/>
<rect x="576" y="80" width="31" height="8" fill="#000"/>
<rect x="594" y="104" width="13" height="8" fill="#000"/>
<rect x="577" y="112" width="30" height="8" fill="#000"/>
<rect x="595" y="136" width="12" height="8" fill="#000"/>
<rect x="577" y="144" width="30" height="8" fill="#000"/>
<rect x="595" y="168" width="12" height="8" fill="#000"/>
<rect x="577" y="176" width="30" height="8" fill="#000"/>
<rect x="600" y="200" width="7" height="8" fill="#000"/>
<rect x="582" y="208" width="25" height="8" fill="#000"/>
<rect x="600" y="232" width="7" height="8" fill="#000"/>
<rect x="582" y="240" width="25" height="8" fill="#000"/>
<rect x="581" y="256" width="25" height="8" fill="#000"/>
<rect x="569" y="264" width="37" height="8" fill="#000"/>
<rect x="318" y="264" width="90" height="8" fill="#000"/>
<rect x="432" y="264" width="4" height="8" fill="#000"/>
<rect x="456" y="264" width="4" height="8" fill="#000"/>
<rect x="504" y="264" width="18" height="8" fill="#000"/>
<rect x="603" y="336" width="19" height="8" fill="#000"/>
<rect x="603" y="368" width="19" height="8" fill="#000"/>
<rect x="603" y="400" width="19" height="8" fill="#000"/>
<rect x="609" y="432" width="13" height="8" fill="#000"/>
<rect x="380" y="464" width="8" height="8" fill="#000"/>
<rect x="410" y="464" width="12" height="8" fill="#000"/>
<rect x="458" y="464" width="14" height="8" fill="#000"/>
<rect x="503" y="464" width="21" height="8" fill="#000"/>
<rect x="550" y="464" width="24" height="8" fill="#000"/>
<rect x="596" y="464" width="26" height="8" fill="#000"/>
<defs><path id="g0" d="M1 -7h3v1h-3zM0 -6h1v1h-1zM4 -6h1v1h-1zM4 -5h1v1h-1zM3 -4h1v1h-1zM2 -3h1v1h-1zM1 -2h1v1h-1zM0 -1h5v1h-5z"/><path id="g1" d="M1 -7h3v1h-3zM0 -6h1v1h-1zM4 -6h1v1h-1zM0 -5h1v1h-1zM4 -5h1v1h-1zM1 -4h3v1h-3zM0 -3h1v1h-1zM4 -3h1v1h-1zM0 -2h1v1h-1zM4 -2h1v1h-1zM1 -1h3v1h-3z"/><path id="g2" d="M1 -7h3v1h-3zM0 -6h1v1h-1zM4 -6h1v1h-1zM0 -5h1v1h-1zM3 -5h2v1h-2zM0 -4h1v1h-1zM2 -4h1v1h-1zM4 -4h1v1h-1zM0 -3h2v1h-2zM4 -3h1v1h-1zM0 -2h1v1h-1zM4 -2h1v1h-1zM1 -1h3v1h-3z"/><path id="g3" d="M3 -7h1v1h-1zM2 -6h2v1h-2zM1 -5h1v1h-1zM3 -5h1v1h-1zM0 -4h1v1h-1zM3 -4h1v1h-1zM0 -3h5v1h-5zM3 -2h1v1h-1zM3 -1h1v1h-1z"/><path id="g4" d="M2 -7h1v1h-1zM1 -6h2v1h-2zM2 -5h1v1h-1zM2 -4h1v1h-1zM2 -3h1v1h-1zM2 -2h1v1h-1zM1 -1h3v1h-3z"/><path id="g5" d="M2 -7h2v1h-2zM1 -6h1v1h-1zM0 -5h1v1h-1zM0 -4h4v1h-4zM0 -3h1v1h-1zM4 -3h1v1h-1zM0 -2h1v1h-1zM4 -2h1v1h-1zM1 -1h3v1h-3z"/><path id="g6" d="M0 -7h5v1h-5zM4 -6h1v1h-1zM3 -5h1v1h-1zM2 -4h1v1h-1zM2 -3h1v1h-1zM2 -2h1v1h-1zM2 -1h1v1h-1z"/><path id="g7" d="M1 -7h3v1h-3zM0 -6h1v1h-1zM4 -6h1v1h-1zM4 -5h1v1h-1zM2 -4h2v1h-2zM4 -3h1v1h-1zM0 -2h1v1h-1zM4 -2h1v1h-1zM1 -1h3v1h-3z"/><path id="g8" d="M0 -7h1v1h-1zM4 -7h1v1h-1zM0 -6h1v1h-1zM4 -6h1v1h-1zM0 -5h1v1h-1zM4 -5h1v1h-1zM0 -4h1v1h-1zM4 -4h1v1h-1zM0 -3h1v1h-1zM4 -3h1v1h-1zM1 -2h1v1h-1zM3 -2h1v1h-1zM2 -1h1v1h-1z"/><path id="g9" d="M1 -5h3v1h-3zM0 -4h1v1h-1zM4 -4h1v1h-1zM0 -3h5v1h-5zM0 -2h1v1h-1zM1 -1h3v1h-3z"/><path id="g10" d="M0 -5h4v1h-4zM1 -4h1v1h-1zM4 -4h1v1h-1zM1 -3h1v1h-1zM1 -2h1v1h-1zM0 -1h3v1h-3z"/><path id="g12" d="M1 -2h2v1h-2zM1 -1h2v1h-2z"/><path id="g13" d="M0 -7h4v1h-4zM0 -6h1v1h-1zM4 -6h1v1h-1zM0 -5h1v1h-1zM4 -5h1v1h-1zM0 -4h4v1h-4zM0 -3h1v1h-1zM0 -2h1v1h-1zM0 -1h1v1h-1z"/><path id="g14" d="M1 -5h3v1h-3zM0 -4h1v1h-1zM4 -4h1v1h-1zM0 -3h1v1h-1zM4 -3h1v1h-1zM0 -2h1v1h-1zM4 -2h1v1h-1zM1 -1h3v1h-3z"/><path id="g15" d="M1 -5h3v1h-3zM0 -4h1v1h-1zM0 -3h1v1h-1zM0 -2h1v1h-1zM4 -2h1v1h-1zM1 -1h3v1h-3z"/><path id="g16" d="M1 -5h4v1h-4zM0 -4h1v1h-1zM1 -3h3v1h-3zM4 -2h1v1h-1zM0 -1h4v1h-4z"/><path id="g17" d="M1 -5h2v1h-2zM1 -4h2v1h-2zM1 -2h2v1h-2zM1 -1h2v1h-2z"/><path id="g18" d="M1 -7h3v1h-3zM0 -6h1v1h-1zM4 -6h1v1h-1zM0 -5h1v1h-1zM0 -4h1v1h-1zM0 -3h1v1h-1zM0 -2h1v1h-1zM4 -2h1v1h-1zM1 -1h3v1h-3z"/><path id="g19" d="M0 -5h1v1h-1zM4 -5h1v1h-1zM1 -4h1v1h-1zM3 -4h1v1h-1zM2 -3h1v1h-1zM1 -2h1v1h-1zM3 -2h1v1h-1zM0 -1h1v1h-1zM4 -1h1v1h-1z"/><path id="g20" d="M0 -5h1v1h-1zM4 -5h1v1h-1zM0 -4h1v1h-1zM4 -4h1v1h-1zM0 -3h1v1h-1zM4 -3h1v1h-1zM1 -2h4v1h-4zM4 -1h1v1h-1zM1 0h3v1h-3z"/><path id="g21" d="M2 -7h1v1h-1zM1 -5h2v1h-2zM2 -4h1v1h-1zM2 -3h1v1h-1zM2 -2h1v1h-1zM1 -1h3v1h-3z"/><path id="g22" d="M0 -7h5v1h-5zM0 -6h1v1h-1zM0 -5h4v1h-4zM4 -4h1v1h-1zM4 -3h1v1h-1zM0 -2h1v1h-1zM4 -2h1v1h-1zM1 -1h3v1h-3z"/><path id="g23" d="M1 -7h3v1h-3zM5 -7h1v1h-1zM7 -7h1v1h-1zM2 -6h1v1h-1zM5 -6h3v1h-3zM2 -5h1v1h-1zM5 -5h1v1h-1zM7 -5h1v1h-1zM2 -4h1v1h-1zM5 -4h1v1h-1zM7 -4h1v1h-1z"/><path id="g24" d="M0 -5h5v1h-5zM3 -4h1v1h-1zM2 -3h1v1h-1zM1 -2h1v1h-1zM0 -1h5v1h-5z"/><path id="g25" d="M0 -7h1v1h-1zM4 -7h1v1h-1zM0 -6h2v1h-2zM3 -6h2v1h-2zM0 -5h1v1h-1zM2 -5h1v1h-1zM4 -5h1v1h-1zM0 -4h1v1h-1zM2 -4h1v1h-1zM4 -4h1v1h-1zM0 -3h1v1h-1zM4 -3h1v1h-1zM0 -2h1v1h-1zM4 -2h1v1h-1zM0 -1h1v1h-1zM4 -1h1v1h-1z"/><path id="g26" d="M0 -7h1v1h-1zM4 -7h1v1h-1zM0 -6h1v1h-1zM4 -6h1v1h-1zM0 -5h1v1h-1zM4 -5h1v1h-1zM0 -4h5v1h-5zM0 -3h1v1h-1zM4 -3h1v1h-1zM0 -2h1v1h-1zM4 -2h1v1h-1zM0 -1h1v1h-1zM4 -1h1v1h-1z"/><path id="g27" d="M1 -7h1v1h-1zM1 -6h1v1h-1zM0 -5h4v1h-4zM1 -4h1v1h-1zM1 -3h1v1h-1zM1 -2h1v1h-1zM3 -2h1v1h-1zM2 -1h1v1h-1z"/><path id="g28" d="M0 -7h1v1h-1zM4 -7h1v1h-1zM0 -6h1v1h-1zM4 -6h1v1h-1zM0 -5h1v1h-1zM4 -5h1v1h-1zM0 -4h1v1h-1zM4 -4h1v1h-1zM0 -3h1v1h-1zM4 -3h1v1h-1zM0 -2h1v1h-1zM4 -2h1v1h-1zM1 -1h3v1h-3z"/><path id="g29" d="M1 -7h3v1h-3zM2 -6h1v1h-1zM2 -5h1v1h-1zM2 -4h1v1h-1zM2 -3h1v1h-1zM2 -2h1v1h-1zM1 -1h3v1h-3z"/><path id="g30" d="M0 -7h4v1h-4zM0 -6h1v1h-1zM4 -6h1v1h-1zM0 -5h1v1h-1zM4 -5h1v1h-1zM0 -4h1v1h-1zM4 -4h1v1h-1zM0 -3h1v1h-1zM4 -3h1v1h-1zM0 -2h1v1h-1zM4 -2h1v1h-1zM0 -1h4v1h-4z"/><path id="g31" d="M0 -5h1v1h-1zM2 -5h2v1h-2zM0 -4h2v1h-2zM4 -4h1v1h-1zM0 -3h1v1h-1zM4 -3h1v1h-1zM0 -2h1v1h-1zM4 -2h1v1h-1zM0 -1h1v1h-1zM4 -1h1v1h-1z"/><path id="g32" d="M0 -5h1v1h-1zM4 -5h1v1h-1zM0 -4h1v1h-1zM4 -4h1v1h-1zM0 -3h1v1h-1zM4 -3h1v1h-1zM0 -2h1v1h-1zM3 -2h2v1h-2zM1 -1h2v1h-2zM4 -1h1v1h-1z"/><path id="g33" d="M0 -5h4v1h-4zM0 -4h1v1h-1zM4 -4h1v1h-1zM0 -3h1v1h-1zM4 -3h1v1h-1zM0 -2h4v1h-4zM0 -1h1v1h-1zM0 0h1v1h-1z"/><path id="g34" d="M0 -7h1v1h-1zM4 -7h1v1h-1zM0 -6h1v1h-1zM4 -6h1v1h-1zM0 -5h2v1h-2zM4 -5h1v1h-1zM0 -4h1v1h-1zM2 -4h1v1h-1zM4 -4h1v1h-1zM0 -3h1v1h-1zM3 -3h2v1h-2zM0 -2h1v1h-1zM4 -2h1v1h-1zM0 -1h1v1h-1zM4 -1h1v1h-1z"/><path id="g35" d="M0 -7h1v1h-1zM4 -7h1v1h-1zM0 -6h1v1h-1zM4 -6h1v1h-1zM1 -5h1v1h-1zM3 -5h1v1h-1zM2 -4h1v1h-1zM2 -3h1v1h-1zM2 -2h1v1h-1zM2 -1h1v1h-1z"/><path id="g36" d="M0 -5h2v1h-2zM3 -5h1v1h-1zM0 -4h1v1h-1zM2 -4h1v1h-1zM4 -4h1v1h-1zM0 -3h1v1h-1zM2 -3h1v1h-1zM4 -3h1v1h-1zM0 -2h1v1h-1zM2 -2h1v1h-1zM4 -2h1v1h-1zM0 -1h1v1h-1zM4 -1h1v1h-1z"/><path id="g37" d="M0 -7h4v1h-4zM0 -6h1v1h-1zM4 -6h1v1h-1zM0 -5h1v1h-1zM4 -5h1v1h-1zM0 -4h4v1h-4zM0 -3h1v1h-1zM4 -3h1v1h-1zM0 -2h1v1h-1zM4 -2h1v1h-1zM0 -1h4v1h-4z"/><path id="g38" d="M0 -7h1v1h-1zM0 -6h1v1h-1zM0 -5h1v1h-1zM2 -5h2v1h-2zM0 -4h2v1h-2zM4 -4h1v1h-1zM0 -3h1v1h-1zM4 -3h1v1h-1zM0 -2h1v1h-1zM4 -2h1v1h-1zM0 -1h1v1h-1zM4 -1h1v1h-1z"/><path id="g39" d="M1 -5h3v1h-3zM4 -4h1v1h-1zM1 -3h4v1h-4zM0 -2h1v1h-1zM4 -2h1v1h-1zM1 -1h4v1h-4z"/><path id="g40" d="M4 -7h1v1h-1zM4 -6h1v1h-1zM1 -5h4v1h-4zM0 -4h1v1h-1zM4 -4h1v1h-1zM0 -3h1v1h-1zM4 -3h1v1h-1zM0 -2h1v1h-1zM4 -2h1v1h-1zM1 -1h4v1h-4z"/><path id="g41" d="M0 -5h1v1h-1zM4 -5h1v1h-1zM0 -4h1v1h-1zM4 -4h1v1h-1zM0 -3h1v1h-1zM2 -3h1v1h-1zM4 -3h1v1h-1zM0 -2h1v1h-1zM2 -2h1v1h-1zM4 -2h1v1h-1zM1 -1h1v1h-1zM3 -1h1v1h-1z"/><path id="g42" d="M1 -7h3v1h-3zM0 -6h1v1h-1zM4 -6h1v1h-1zM0 -5h1v1h-1zM4 -5h1v1h-1zM1 -4h4v1h-4zM4 -3h1v1h-1zM3 -2h1v1h-1zM1 -1h2v1h-2z"/><path id="g43" d="M4 -6h1v1h-1zM3 -5h1v1h-1zM2 -4h1v1h-1zM1 -3h1v1h-1zM0 -2h1v1h-1z"/><path id="g44" d="M1 -7h3v1h-3zM0 -6h1v1h-1zM4 -6h1v1h-1zM0 -5h1v1h-1zM1 -4h3v1h-3zM4 -3h1v1h-1zM0 -2h1v1h-1zM4 -2h1v1h-1zM1 -1h3v1h-3z"/><path id="g45" d="M0 -7h4v1h-4zM0 -6h1v1h-1zM4 -6h1v1h-1zM0 -5h1v1h-1zM4 -5h1v1h-1zM0 -4h4v1h-4zM0 -3h1v1h-1zM2 -3h1v1h-1zM0 -2h1v1h-1zM3 -2h1v1h-1zM0 -1h1v1h-1zM4 -1h1v1h-1z"/><path id="g46" d="M1 -7h3v1h-3zM0 -6h1v1h-1zM4 -6h1v1h-1zM0 -5h1v1h-1zM0 -4h1v1h-1zM2 -4h3v1h-3zM0 -3h1v1h-1zM4 -3h1v1h-1zM0 -2h1v1h-1zM4 -2h1v1h-1zM1 -1h4v1h-4z"/><path id="g47" d="M0 -7h5v1h-5zM0 -6h1v1h-1zM0 -5h1v1h-1zM0 -4h4v1h-4zM0 -3h1v1h-1zM0 -2h1v1h-1zM0 -1h5v1h-5z"/><path id="g48" d="M0 -7h1v1h-1zM4 -7h1v1h-1zM0 -6h1v1h-1zM4 -6h1v1h-1zM1 -5h1v1h-1zM3 -5h1v1h-1zM2 -4h1v1h-1zM1 -3h1v1h-1zM3 -3h1v1h-1zM0 -2h1v1h-1zM4 -2h1v1h-1zM0 -1h1v1h-1zM4 -1h1v1h-1z"/><path id="g49" d="M2 -6h1v1h-1zM2 -5h1v1h-1zM0 -4h5v1h-5zM2 -3h1v1h-1zM2 -2h1v1h-1z"/><path id="g50" d="M1 -7h3v1h-3zM0 -6h1v1h-1zM4 -6h1v1h-1zM0 -5h1v1h-1zM4 -5h1v1h-1zM0 -4h5v1h-5zM0 -3h1v1h-1zM4 -3h1v1h-1zM0 -2h1v1h-1zM4 -2h1v1h-1zM0 -1h1v1h-1zM4 -1h1v1h-1z"/><path id="g51" d="M1 -7h2v1h-2zM2 -6h1v1h-1zM2 -5h1v1h-1zM2 -4h1v1h-1zM2 -3h1v1h-1zM2 -2h1v1h-1zM1 -1h3v1h-3z"/><path id="g52" d="M1 -7h1v1h-1zM2 -6h1v1h-1zM3 -5h1v1h-1zM3 -4h1v1h-1zM3 -3h1v1h-1zM2 -2h1v1h-1zM1 -1h1v1h-1z"/><path id="g53" d="M0 -7h1v1h-1zM4 -7h1v1h-1zM0 -6h1v1h-1zM3 -6h1v1h-1zM0 -5h1v1h-1zM2 -5h1v1h-1zM0 -4h2v1h-2zM0 -3h1v1h-1zM2 -3h1v1h-1zM0 -2h1v1h-1zM3 -2h1v1h-1zM0 -1h1v1h-1zM4 -1h1v1h-1z"/><path id="g54" d="M3 -7h1v1h-1zM2 -6h1v1h-1zM1 -5h1v1h-1zM1 -4h1v1h-1zM1 -3h1v1h-1zM2 -2h1v1h-1zM3 -1h1v1h-1z"/><path id="g55" d="M0 -5h1v1h-1zM4 -5h1v1h-1zM0 -4h1v1h-1zM4 -4h1v1h-1zM0 -3h1v1h-1zM4 -3h1v1h-1zM1 -2h1v1h-1zM3 -2h1v1h-1zM2 -1h1v1h-1z"/><path id="g56" d="M0 -7h5v1h-5zM0 -6h1v1h-1zM0 -5h1v1h-1zM0 -4h4v1h-4zM0 -3h1v1h-1zM0 -2h1v1h-1zM0 -1h1v1h-1z"/><path id="g57" d="M0 -7h5v1h-5zM2 -6h1v1h-1zM2 -5h1v1h-1zM2 -4h1v1h-1zM2 -3h1v1h-1zM2 -2h1v1h-1zM2 -1h1v1h-1z"/><path id="g58" d="M2 -7h3v1h-3zM3 -6h1v1h-1zM3 -5h1v1h-1zM3 -4h1v1h-1zM3 -3h1v1h-1zM0 -2h1v1h-1zM3 -2h1v1h-1zM1 -1h2v1h-2z"/><path id="g59" d="M1 -7h3v1h-3zM0 -6h1v1h-1zM4 -6h1v1h-1zM0 -5h1v1h-1zM4 -5h1v1h-1zM0 -4h1v1h-1zM4 -4h1v1h-1zM0 -3h1v1h-1zM4 -3h1v1h-1zM0 -2h1v1h-1zM4 -2h1v1h-1zM1 -1h3v1h-3z"/><path id="g60" d="M1 -5h4v1h-4zM0 -4h1v1h-1zM4 -4h1v1h-1zM0 -3h1v1h-1zM4 -3h1v1h-1zM1 -2h4v1h-4zM4 -1h1v1h-1zM1 0h3v1h-3z"/><path id="g61" d="M0 -4h4v1h-4z"/><path id="g62" d="M2 -7h2v1h-2zM1 -6h1v1h-1zM4 -6h1v1h-1zM1 -5h1v1h-1zM0 -4h3v1h-3zM1 -3h1v1h-1zM1 -2h1v1h-1zM1 -1h1v1h-1z"/><path id="g63" d="M3 -7h1v1h-1zM2 -6h1v1h-1zM1 -5h1v1h-1zM0 -4h1v1h-1zM1 -3h1v1h-1zM2 -2h1v1h-1zM3 -1h1v1h-1z"/><path id="g64" d="M1 -7h1v1h-1zM2 -6h1v1h-1zM3 -5h1v1h-1zM4 -4h1v1h-1zM3 -3h1v1h-1zM2 -2h1v1h-1zM1 -1h1v1h-1z"/><path id="g65" d="M0 -7h1v1h-1zM0 -6h1v1h-1zM0 -5h1v1h-1zM3 -5h1v1h-1zM0 -4h1v1h-1zM2 -4h1v1h-1zM0 -3h2v1h-2zM0 -2h1v1h-1zM2 -2h1v1h-1zM0 -1h1v1h-1zM3 -1h1v1h-1z"/><path id="g66" d="M0 -7h1v1h-1zM0 -6h1v1h-1zM0 -5h1v1h-1zM0 -4h1v1h-1zM0 -3h1v1h-1zM0 -2h1v1h-1zM0 -1h5v1h-5z"/><path id="g67" d="M0 -7h1v1h-1zM4 -7h1v1h-1zM0 -6h1v1h-1zM4 -6h1v1h-1zM0 -5h1v1h-1zM4 -5h1v1h-1zM0 -4h1v1h-1zM2 -4h1v1h-1zM4 -4h1v1h-1zM0 -3h1v1h-1zM2 -3h1v1h-1zM4 -3h1v1h-1zM0 -2h1v1h-1zM2 -2h1v1h-1zM4 -2h1v1h-1zM1 -1h1v1h-1zM3 -1h1v1h-1z"/><path id="g68" d="M0 -7h1v1h-1zM0 -6h1v1h-1zM0 -5h4v1h-4zM0 -4h1v1h-1zM4 -4h1v1h-1zM0 -3h1v1h-1zM4 -3h1v1h-1zM0 -2h1v1h-1zM4 -2h1v1h-1zM0 -1h4v1h-4z"/><path id="g69" d="M1 -7h3v1h-3zM0 -6h1v1h-1zM4 -6h1v1h-1zM0 -5h1v1h-1zM4 -5h1v1h-1zM0 -4h1v1h-1zM4 -4h1v1h-1zM0 -3h1v1h-1zM2 -3h1v1h-1zM4 -3h1v1h-1zM0 -2h1v1h-1zM3 -2h1v1h-1zM1 -1h2v1h-2zM4 -1h1v1h-1z"/></defs>
<g fill="#80F0E0" shape-rendering="crispEdges"><use href="#g8" x="589" y="7"/><use href="#g9" x="595" y="7"/><use href="#g10" x="601" y="7"/><use href="#g3" x="613" y="7"/><use href="#g12" x="619" y="7"/><use href="#g6" x="625" y="7"/><use href="#g1" x="631" y="7"/><use href="#g50" x="43" y="303"/><use href="#g36" x="49" y="303"/><use href="#g22" x="55" y="303"/><use href="#g19" x="61" y="303"/><use href="#g1" x="67" y="303"/><use href="#g5" x="73" y="303"/><use href="#g61" x="79" y="303"/><use href="#g4" x="85" y="303"/><use href="#g7" x="91" y="303"/><use href="#g7" x="97" y="303"/><use href="#g13" x="109" y="303"/><use href="#g5" x="115" y="303"/><use href="#g61" x="121" y="303"/><use href="#g0" x="127" y="303"/><use href="#g2" x="133" y="303"/><use href="#g2" x="139" y="303"/><use href="#g13" x="157" y="303"/><use href="#g9" x="163" y="303"/><use href="#g31" x="169" y="303"/><use href="#g27" x="175" y="303"/><use href="#g21" x="181" y="303"/><use href="#g32" x="187" y="303"/><use href="#g36" x="193" y="303"/><use href="#g29" x="199" y="303"/><use href="#g29" x="205" y="303"/><use href="#g61" x="211" y="303"/><use href="#g0" x="217" y="303"/><use href="#g7" x="223" y="303"/><use href="#g7" x="229" y="303"/><use href="#g13" x="253" y="303"/><use href="#g9" x="259" y="303"/><use href="#g31" x="265" y="303"/><use href="#g27" x="271" y="303"/><use href="#g21" x="277" y="303"/><use href="#g32" x="283" y="303"/><use href="#g36" x="289" y="303"/><use href="#g29" x="295" y="303"/><use href="#g29" x="301" y="303"/><use href="#g61" x="307" y="303"/><use href="#g3" x="313" y="303"/><use href="#g2" x="319" y="303"/><use href="#g2" x="325" y="303"/><use href="#g13" x="43" y="311"/><use href="#g9" x="49" y="311"/><use href="#g31" x="55" y="311"/><use href="#g27" x="61" y="311"/><use href="#g21" x="67" y="311"/><use href="#g32" x="73" y="311"/><use href="#g36" x="79" y="311"/><use href="#g61" x="85" y="311"/><use href="#g4" x="91" y="311"/><use href="#g7" x="97" y="311"/><use href="#g7" x="103" y="311"/><use href="#g53" x="175" y="311"/><use href="#g5" x="181" y="311"/><use href="#g61" x="187" y="311"/><use href="#g0" x="193" y="311"/><use href="#g61" x="199" y="311"/><use href="#g0" x="205" y="311"/><use href="#g5" x="211" y="311"/><use href="#g5" x="217" y="311"/><use href="#g18" x="277" y="311"/><use href="#g9" x="283" y="311"/><use href="#g51" x="289" y="311"/><use href="#g9" x="295" y="311"/><use href="#g10" x="301" y="311"/><use href="#g14" x="307" y="311"/><use href="#g31" x="313" y="311"/><use href="#g61" x="319" y="311"/><use href="#g22" x="325" y="311"/><use href="#g2" x="331" y="311"/><use href="#g2" x="337" y="311"/><use href="#g21" x="31" y="343"/><use href="#g3" x="37" y="343"/><use href="#g1" x="43" y="343"/><use href="#g5" x="49" y="343"/><use href="#g30" x="55" y="343"/><use href="#g48" x="61" y="343"/><use href="#g0" x="67" y="343"/><use href="#g61" x="73" y="343"/><use href="#g22" x="79" y="343"/><use href="#g2" x="85" y="343"/><use href="#g13" x="109" y="343"/><use href="#g22" x="115" y="343"/><use href="#g22" x="121" y="343"/><use href="#g18" x="127" y="343"/><use href="#g61" x="133" y="343"/><use href="#g0" x="139" y="343"/><use href="#g7" x="145" y="343"/><use href="#g7" x="151" y="343"/><use href="#g18" x="211" y="343"/><use href="#g9" x="217" y="343"/><use href="#g51" x="223" y="343"/><use href="#g9" x="229" y="343"/><use href="#g10" x="235" y="343"/><use href="#g14" x="241" y="343"/><use href="#g31" x="247" y="343"/><use href="#g61" x="253" y="343"/><use href="#g7" x="259" y="343"/><use href="#g7" x="265" y="343"/><use href="#g7" x="271" y="343"/><use href="#g50" x="301" y="343"/><use href="#g27" x="307" y="343"/><use href="#g38" x="313" y="343"/><use href="#g51" x="319" y="343"/><use href="#g14" x="325" y="343"/><use href="#g31" x="331" y="343"/><use href="#g61" x="337" y="343"/><use href="#g5" x="343" y="343"/><use href="#g2" x="349" y="343"/><use href="#g2" x="355" y="343"/><use href="#g7" x="19" y="351"/><use href="#g1" x="25" y="351"/><use href="#g5" x="31" y="351"/><use href="#g30" x="37" y="351"/><use href="#g48" x="43" y="351"/><use href="#g61" x="49" y="351"/><use href="#g3" x="55" y="351"/><use href="#g2" x="61" y="351"/><use href="#g18" x="103" y="351"/><use href="#g19" x="109" y="351"/><use href="#g5" x="115" y="351"/><use href="#g19" x="121" y="351"/><use href="#g1" x="127" y="351"/><use href="#g5" x="133" y="351"/><use href="#g61" x="139" y="351"/><use href="#g0" x="145" y="351"/><use href="#g7" x="151" y="351"/><use href="#g7" x="157" y="351"/><use href="#g13" x="193" y="351"/><use href="#g9" x="199" y="351"/><use href="#g31" x="205" y="351"/><use href="#g27" x="211" y="351"/><use href="#g21" x="217" y="351"/><use href="#g32" x="223" y="351"/><use href="#g36" x="229" y="351"/><use href="#g29" x="235" y="351"/><use href="#g29" x="241" y="351"/><use href="#g61" x="247" y="351"/><use href="#g7" x="253" y="351"/><use href="#g2" x="259" y="351"/><use href="#g2" x="265" y="351"/><use href="#g53" x="301" y="351"/><use href="#g5" x="307" y="351"/><use href="#g61" x="313" y="351"/><use href="#g29" x="319" y="351"/><use href="#g29" x="325" y="351"/><use href="#g29" x="331" y="351"/><use href="#g61" x="337" y="351"/><use href="#g22" x="343" y="351"/><use href="#g2" x="349" y="351"/><use href="#g2" x="355" y="351"/><use href="#g67" x="19" y="407"/><use href="#g30" x="25" y="407"/><use href="#g18" x="31" y="407"/><use href="#g50" x="37" y="407"/><use href="#g18" x="43" y="407"/><use href="#g7" x="49" y="407"/><use href="#g4" x="55" y="407"/><use href="#g5" x="61" y="407"/><use href="#g2" x="67" y="407"/><use href="#g2" x="73" y="407"/><use href="#g26" x="79" y="407"/><use href="#g54" x="85" y="407"/><use href="#g4" x="91" y="407"/><use href="#g12" x="97" y="407"/><use href="#g22" x="103" y="407"/><use href="#g4" x="109" y="407"/><use href="#g46" x="117" y="407"/><use href="#g37" x="123" y="407"/><use href="#g52" x="129" y="407"/><use href="#g25" x="157" y="407"/><use href="#g39" x="163" y="407"/><use href="#g19" x="169" y="407"/><use href="#g27" x="175" y="407"/><use href="#g14" x="181" y="407"/><use href="#g10" x="187" y="407"/><use href="#g42" x="197" y="407"/><use href="#g2" x="203" y="407"/><use href="#g5" x="209" y="407"/><use href="#g22" x="215" y="407"/><use href="#g4" x="221" y="407"/><use href="#g28" x="227" y="407"/><use href="#g0" x="233" y="407"/><use href="#g54" x="239" y="407"/><use href="#g5" x="245" y="407"/><use href="#g12" x="251" y="407"/><use href="#g2" x="257" y="407"/><use href="#g2" x="263" y="407"/><use href="#g46" x="273" y="407"/><use href="#g37" x="279" y="407"/><use href="#g52" x="285" y="407"/><use href="#g69" x="72" y="415"/><use href="#g56" x="78" y="415"/><use href="#g37" x="84" y="415"/><use href="#g51" x="94" y="415"/><use href="#g15" x="100" y="415"/><use href="#g27" x="106" y="415"/><use href="#g4" x="112" y="415"/><use href="#g2" x="118" y="415"/><use href="#g54" x="124" y="415"/><use href="#g4" x="130" y="415"/><use href="#g7" x="136" y="415"/><use href="#g12" x="142" y="415"/><use href="#g42" x="148" y="415"/><use href="#g42" x="154" y="415"/><use href="#g46" x="165" y="415"/><use href="#g37" x="171" y="415"/><use href="#g52" x="177" y="415"/><use href="#g25" x="223" y="415"/><use href="#g39" x="229" y="415"/><use href="#g19" x="235" y="415"/><use href="#g27" x="241" y="415"/><use href="#g14" x="247" y="415"/><use href="#g10" x="253" y="415"/><use href="#g30" x="263" y="415"/><use href="#g6" x="269" y="415"/><use href="#g3" x="275" y="415"/><use href="#g2" x="281" y="415"/><use href="#g48" x="287" y="415"/><use href="#g54" x="293" y="415"/><use href="#g7" x="299" y="415"/><use href="#g6" x="305" y="415"/><use href="#g12" x="311" y="415"/><use href="#g0" x="317" y="415"/><use href="#g1" x="323" y="415"/><use href="#g46" x="334" y="415"/><use href="#g37" x="340" y="415"/><use href="#g52" x="346" y="415"/><use href="#g25" x="79" y="447"/><use href="#g13" x="85" y="447"/><use href="#g47" x="91" y="447"/><use href="#g7" x="97" y="447"/><use href="#g2" x="103" y="447"/><use href="#g5" x="109" y="447"/><use href="#g3" x="115" y="447"/><use href="#g50" x="121" y="447"/><use href="#g57" x="127" y="447"/><use href="#g54" x="133" y="447"/><use href="#g5" x="139" y="447"/><use href="#g12" x="145" y="447"/><use href="#g2" x="151" y="447"/><use href="#g3" x="157" y="447"/><use href="#g46" x="167" y="447"/><use href="#g37" x="173" y="447"/><use href="#g52" x="179" y="447"/><use href="#g29" x="217" y="447"/><use href="#g37" x="223" y="447"/><use href="#g25" x="229" y="447"/><use href="#g30" x="240" y="447"/><use href="#g57" x="246" y="447"/><use href="#g66" x="252" y="447"/><use href="#g50" x="258" y="447"/><use href="#g7" x="269" y="447"/><use href="#g2" x="275" y="447"/><use href="#g6" x="281" y="447"/><use href="#g2" x="287" y="447"/><use href="#g7" x="293" y="447"/><use href="#g2" x="299" y="447"/><use href="#g54" x="305" y="447"/><use href="#g0" x="311" y="447"/><use href="#g1" x="317" y="447"/><use href="#g12" x="323" y="447"/><use href="#g5" x="329" y="447"/><use href="#g7" x="335" y="447"/><use href="#g46" x="345" y="447"/><use href="#g37" x="351" y="447"/><use href="#g52" x="357" y="447"/><use href="#g69" x="73" y="455"/><use href="#g56" x="79" y="455"/><use href="#g37" x="85" y="455"/><use href="#g47" x="95" y="455"/><use href="#g66" x="101" y="455"/><use href="#g22" x="107" y="455"/><use href="#g12" x="113" y="455"/><use href="#g4" x="119" y="455"/><use href="#g50" x="125" y="455"/><use href="#g54" x="131" y="455"/><use href="#g3" x="137" y="455"/><use href="#g12" x="143" y="455"/><use href="#g6" x="149" y="455"/><use href="#g5" x="155" y="455"/><use href="#g46" x="165" y="455"/><use href="#g37" x="171" y="455"/><use href="#g52" x="177" y="455"/><use href="#g69" x="193" y="455"/><use href="#g56" x="199" y="455"/><use href="#g37" x="205" y="455"/><use href="#g66" x="215" y="455"/><use href="#g25" x="221" y="455"/><use href="#g54" x="227" y="455"/><use href="#g42" x="233" y="455"/><use href="#g12" x="239" y="455"/><use href="#g22" x="245" y="455"/><use href="#g6" x="251" y="455"/><use href="#g46" x="261" y="455"/><use href="#g37" x="267" y="455"/><use href="#g52" x="273" y="455"/></g>
<g fill="#FFFFFF" shape-rendering="crispEdges"><use href="#g13" x="19" y="23"/><use href="#g10" x="25" y="23"/><use href="#g14" x="31" y="23"/><use href="#g15" x="37" y="23"/><use href="#g9" x="43" y="23"/><use href="#g16" x="49" y="23"/><use href="#g16" x="55" y="23"/><use href="#g14" x="61" y="23"/><use href="#g10" x="67" y="23"/><use href="#g17" x="97" y="23"/><use href="#g18" x="106" y="23"/><use href="#g20" x="112" y="23"/><use href="#g10" x="118" y="23"/><use href="#g21" x="124" y="23"/><use href="#g19" x="130" y="23"/><use href="#g22" x="141" y="23"/><use href="#g19" x="147" y="23"/><use href="#g1" x="153" y="23"/><use href="#g5" x="159" y="23"/><use href="#g23" x="165" y="23"/><use href="#g4" x="190" y="23"/><use href="#g0" x="196" y="23"/><use href="#g2" x="202" y="23"/><use href="#g25" x="211" y="23"/><use href="#g26" x="217" y="23"/><use href="#g24" x="223" y="23"/><use href="#g18" x="19" y="31"/><use href="#g13" x="25" y="31"/><use href="#g28" x="31" y="31"/><use href="#g29" x="37" y="31"/><use href="#g30" x="43" y="31"/><use href="#g31" x="55" y="31"/><use href="#g14" x="61" y="31"/><use href="#g27" x="67" y="31"/><use href="#g16" x="79" y="31"/><use href="#g32" x="85" y="31"/><use href="#g33" x="91" y="31"/><use href="#g33" x="97" y="31"/><use href="#g14" x="103" y="31"/><use href="#g10" x="109" y="31"/><use href="#g27" x="115" y="31"/><use href="#g34" x="205" y="31"/><use href="#g13" x="211" y="31"/><use href="#g28" x="217" y="31"/><use href="#g17" x="223" y="31"/><use href="#g35" x="229" y="31"/><use href="#g9" x="235" y="31"/><use href="#g16" x="241" y="31"/><use href="#g25" x="19" y="47"/><use href="#g9" x="25" y="47"/><use href="#g36" x="31" y="47"/><use href="#g14" x="37" y="47"/><use href="#g10" x="43" y="47"/><use href="#g20" x="49" y="47"/><use href="#g16" x="61" y="47"/><use href="#g21" x="67" y="47"/><use href="#g24" x="73" y="47"/><use href="#g9" x="79" y="47"/><use href="#g17" x="194" y="47"/><use href="#g4" x="222" y="47"/><use href="#g5" x="228" y="47"/><use href="#g25" x="238" y="47"/><use href="#g37" x="244" y="47"/><use href="#g25" x="19" y="55"/><use href="#g9" x="25" y="55"/><use href="#g36" x="31" y="55"/><use href="#g14" x="37" y="55"/><use href="#g10" x="43" y="55"/><use href="#g20" x="49" y="55"/><use href="#g37" x="61" y="55"/><use href="#g39" x="67" y="55"/><use href="#g31" x="73" y="55"/><use href="#g40" x="79" y="55"/><use href="#g41" x="85" y="55"/><use href="#g21" x="91" y="55"/><use href="#g40" x="97" y="55"/><use href="#g27" x="103" y="55"/><use href="#g38" x="109" y="55"/><use href="#g17" x="194" y="55"/><use href="#g7" x="220" y="55"/><use href="#g42" x="226" y="55"/><use href="#g12" x="232" y="55"/><use href="#g4" x="238" y="55"/><use href="#g5" x="244" y="55"/><use href="#g25" x="253" y="55"/><use href="#g37" x="259" y="55"/><use href="#g43" x="265" y="55"/><use href="#g16" x="271" y="55"/><use href="#g8" x="19" y="71"/><use href="#g21" x="25" y="71"/><use href="#g40" x="31" y="71"/><use href="#g9" x="37" y="71"/><use href="#g14" x="43" y="71"/><use href="#g17" x="49" y="71"/><use href="#g44" x="61" y="71"/><use href="#g7" x="67" y="71"/><use href="#g8" x="79" y="71"/><use href="#g21" x="85" y="71"/><use href="#g45" x="91" y="71"/><use href="#g46" x="97" y="71"/><use href="#g47" x="103" y="71"/><use href="#g30" x="115" y="71"/><use href="#g48" x="121" y="71"/><use href="#g43" x="127" y="71"/><use href="#g46" x="133" y="71"/><use href="#g48" x="139" y="71"/><use href="#g46" x="151" y="71"/><use href="#g28" x="157" y="71"/><use href="#g29" x="163" y="71"/><use href="#g49" x="169" y="71"/><use href="#g7" x="175" y="71"/><use href="#g30" x="181" y="71"/><use href="#g50" x="193" y="71"/><use href="#g15" x="199" y="71"/><use href="#g15" x="205" y="71"/><use href="#g9" x="211" y="71"/><use href="#g51" x="217" y="71"/><use href="#g9" x="223" y="71"/><use href="#g10" x="229" y="71"/><use href="#g39" x="235" y="71"/><use href="#g27" x="241" y="71"/><use href="#g14" x="247" y="71"/><use href="#g10" x="253" y="71"/><use href="#g8" x="19" y="79"/><use href="#g47" x="25" y="79"/><use href="#g44" x="31" y="79"/><use href="#g50" x="37" y="79"/><use href="#g36" x="49" y="79"/><use href="#g9" x="55" y="79"/><use href="#g36" x="61" y="79"/><use href="#g14" x="67" y="79"/><use href="#g10" x="73" y="79"/><use href="#g20" x="79" y="79"/><use href="#g17" x="98" y="79"/><use href="#g3" x="109" y="79"/><use href="#g2" x="115" y="79"/><use href="#g42" x="121" y="79"/><use href="#g5" x="127" y="79"/><use href="#g53" x="137" y="79"/><use href="#g37" x="143" y="79"/><use href="#g54" x="152" y="79"/><use href="#g4" x="158" y="79"/><use href="#g6" x="164" y="79"/><use href="#g6" x="170" y="79"/><use href="#g22" x="176" y="79"/><use href="#g1" x="182" y="79"/><use href="#g53" x="192" y="79"/><use href="#g37" x="198" y="79"/><use href="#g43" x="204" y="79"/><use href="#g16" x="210" y="79"/><use href="#g52" x="216" y="79"/><use href="#g26" x="19" y="95"/><use href="#g39" x="25" y="95"/><use href="#g10" x="31" y="95"/><use href="#g40" x="37" y="95"/><use href="#g40" x="49" y="95"/><use href="#g10" x="55" y="95"/><use href="#g21" x="61" y="95"/><use href="#g55" x="67" y="95"/><use href="#g9" x="73" y="95"/><use href="#g2" x="85" y="95"/><use href="#g17" x="97" y="95"/><use href="#g6" x="109" y="95"/><use href="#g1" x="115" y="95"/><use href="#g6" x="121" y="95"/><use href="#g18" x="127" y="95"/><use href="#g0" x="136" y="95"/><use href="#g22" x="142" y="95"/><use href="#g22" x="148" y="95"/><use href="#g26" x="154" y="95"/><use href="#g5" x="163" y="95"/><use href="#g7" x="169" y="95"/><use href="#g44" x="175" y="95"/><use href="#g5" x="211" y="95"/><use href="#g12" x="217" y="95"/><use href="#g2" x="223" y="95"/><use href="#g7" x="229" y="95"/><use href="#g46" x="238" y="95"/><use href="#g37" x="244" y="95"/><use href="#g25" x="37" y="103"/><use href="#g14" x="43" y="103"/><use href="#g40" x="49" y="103"/><use href="#g9" x="55" y="103"/><use href="#g51" x="61" y="103"/><use href="#g54" x="73" y="103"/><use href="#g13" x="79" y="103"/><use href="#g25" x="85" y="103"/><use href="#g52" x="91" y="103"/><use href="#g17" x="97" y="103"/><use href="#g56" x="109" y="103"/><use href="#g28" x="115" y="103"/><use href="#g58" x="121" y="103"/><use href="#g29" x="127" y="103"/><use href="#g57" x="133" y="103"/><use href="#g44" x="139" y="103"/><use href="#g28" x="145" y="103"/><use href="#g25" x="157" y="103"/><use href="#g13" x="163" y="103"/><use href="#g47" x="169" y="103"/><use href="#g7" x="175" y="103"/><use href="#g2" x="181" y="103"/><use href="#g5" x="187" y="103"/><use href="#g3" x="193" y="103"/><use href="#g50" x="199" y="103"/><use href="#g57" x="205" y="103"/><use href="#g18" x="19" y="119"/><use href="#g38" x="25" y="119"/><use href="#g21" x="31" y="119"/><use href="#g33" x="37" y="119"/><use href="#g16" x="43" y="119"/><use href="#g9" x="49" y="119"/><use href="#g27" x="55" y="119"/><use href="#g17" x="74" y="119"/><use href="#g44" x="85" y="119"/><use href="#g21" x="91" y="119"/><use href="#g44" x="97" y="119"/><use href="#g3" x="109" y="119"/><use href="#g42" x="115" y="119"/><use href="#g5" x="121" y="119"/><use href="#g43" x="127" y="119"/><use href="#g3" x="133" y="119"/><use href="#g42" x="139" y="119"/><use href="#g6" x="145" y="119"/><use href="#g37" x="19" y="127"/><use href="#g29" x="25" y="127"/><use href="#g59" x="31" y="127"/><use href="#g44" x="37" y="127"/><use href="#g17" x="43" y="127"/><use href="#g50" x="55" y="127"/><use href="#g41" x="61" y="127"/><use href="#g39" x="67" y="127"/><use href="#g10" x="73" y="127"/><use href="#g40" x="79" y="127"/><use href="#g25" x="91" y="127"/><use href="#g14" x="97" y="127"/><use href="#g40" x="103" y="127"/><use href="#g32" x="109" y="127"/><use href="#g51" x="115" y="127"/><use href="#g39" x="121" y="127"/><use href="#g10" x="127" y="127"/><use href="#g37" x="139" y="127"/><use href="#g29" x="145" y="127"/><use href="#g59" x="151" y="127"/><use href="#g44" x="157" y="127"/><use href="#g55" x="169" y="127"/><use href="#g3" x="175" y="127"/><use href="#g12" x="181" y="127"/><use href="#g22" x="187" y="127"/><use href="#g2" x="193" y="127"/><use href="#g46" x="199" y="127"/><use href="#g54" x="211" y="127"/><use href="#g2" x="217" y="127"/><use href="#g7" x="223" y="127"/><use href="#g43" x="229" y="127"/><use href="#g4" x="235" y="127"/><use href="#g3" x="241" y="127"/><use href="#g43" x="247" y="127"/><use href="#g42" x="253" y="127"/><use href="#g5" x="259" y="127"/><use href="#g52" x="265" y="127"/><use href="#g7" x="156" y="135"/><use href="#g4" x="162" y="135"/><use href="#g61" x="168" y="135"/><use href="#g4" x="174" y="135"/><use href="#g0" x="180" y="135"/><use href="#g61" x="186" y="135"/><use href="#g4" x="192" y="135"/><use href="#g42" x="198" y="135"/><use href="#g42" x="204" y="135"/><use href="#g42" x="210" y="135"/><use href="#g2" x="235" y="135"/><use href="#g4" x="241" y="135"/><use href="#g61" x="247" y="135"/><use href="#g2" x="253" y="135"/><use href="#g4" x="259" y="135"/><use href="#g61" x="265" y="135"/><use href="#g4" x="271" y="135"/><use href="#g42" x="277" y="135"/><use href="#g2" x="283" y="135"/><use href="#g2" x="289" y="135"/><use href="#g59" x="19" y="143"/><use href="#g44" x="25" y="143"/><use href="#g55" x="37" y="143"/><use href="#g9" x="43" y="143"/><use href="#g10" x="49" y="143"/><use href="#g16" x="55" y="143"/><use href="#g21" x="61" y="143"/><use href="#g14" x="67" y="143"/><use href="#g31" x="73" y="143"/><use href="#g17" x="194" y="143"/><use href="#g25" x="206" y="143"/><use href="#g44" x="212" y="143"/><use href="#g61" x="218" y="143"/><use href="#g30" x="224" y="143"/><use href="#g59" x="230" y="143"/><use href="#g44" x="236" y="143"/><use href="#g6" x="248" y="143"/><use href="#g12" x="254" y="143"/><use href="#g4" x="260" y="143"/><use href="#g2" x="266" y="143"/><use href="#g44" x="19" y="255"/><use href="#g20" x="25" y="255"/><use href="#g16" x="31" y="255"/><use href="#g27" x="37" y="255"/><use href="#g9" x="43" y="255"/><use href="#g36" x="49" y="255"/><use href="#g44" x="61" y="255"/><use href="#g33" x="67" y="255"/><use href="#g9" x="73" y="255"/><use href="#g9" x="79" y="255"/><use href="#g40" x="85" y="255"/><use href="#g57" x="97" y="255"/><use href="#g9" x="103" y="255"/><use href="#g16" x="109" y="255"/><use href="#g27" x="115" y="255"/><use href="#g8" x="132" y="255"/><use href="#g9" x="138" y="255"/><use href="#g10" x="144" y="255"/><use href="#g3" x="156" y="255"/><use href="#g12" x="162" y="255"/><use href="#g6" x="168" y="255"/><use href="#g1" x="174" y="255"/><use href="#g45" x="19" y="271"/><use href="#g9" x="25" y="271"/><use href="#g33" x="31" y="271"/><use href="#g14" x="37" y="271"/><use href="#g10" x="43" y="271"/><use href="#g27" x="49" y="271"/><use href="#g62" x="61" y="271"/><use href="#g21" x="67" y="271"/><use href="#g51" x="73" y="271"/><use href="#g9" x="79" y="271"/><use href="#g61" x="91" y="271"/><use href="#g15" x="103" y="271"/><use href="#g10" x="109" y="271"/><use href="#g9" x="115" y="271"/><use href="#g39" x="121" y="271"/><use href="#g27" x="127" y="271"/><use href="#g9" x="133" y="271"/><use href="#g40" x="139" y="271"/><use href="#g14" x="151" y="271"/><use href="#g31" x="157" y="271"/><use href="#g4" x="169" y="271"/><use href="#g0" x="175" y="271"/><use href="#g61" x="181" y="271"/><use href="#g4" x="187" y="271"/><use href="#g2" x="193" y="271"/><use href="#g61" x="199" y="271"/><use href="#g0" x="205" y="271"/><use href="#g2" x="211" y="271"/><use href="#g4" x="217" y="271"/><use href="#g3" x="223" y="271"/><use href="#g2" x="235" y="271"/><use href="#g3" x="241" y="271"/><use href="#g17" x="247" y="271"/><use href="#g4" x="253" y="271"/><use href="#g6" x="259" y="271"/><use href="#g17" x="265" y="271"/><use href="#g22" x="271" y="271"/><use href="#g42" x="277" y="271"/><use href="#g26" x="319" y="23"/><use href="#g30" x="325" y="23"/><use href="#g30" x="331" y="23"/><use href="#g2" x="340" y="23"/><use href="#g63" x="352" y="23"/><use href="#g56" x="358" y="23"/><use href="#g28" x="364" y="23"/><use href="#g58" x="370" y="23"/><use href="#g29" x="376" y="23"/><use href="#g57" x="382" y="23"/><use href="#g44" x="388" y="23"/><use href="#g28" x="394" y="23"/><use href="#g25" x="406" y="23"/><use href="#g13" x="412" y="23"/><use href="#g47" x="418" y="23"/><use href="#g7" x="424" y="23"/><use href="#g2" x="430" y="23"/><use href="#g5" x="436" y="23"/><use href="#g3" x="442" y="23"/><use href="#g50" x="448" y="23"/><use href="#g57" x="454" y="23"/><use href="#g64" x="460" y="23"/><use href="#g13" x="319" y="31"/><use href="#g29" x="325" y="31"/><use href="#g59" x="331" y="31"/><use href="#g3" x="340" y="31"/><use href="#g28" x="352" y="31"/><use href="#g30" x="358" y="31"/><use href="#g25" x="364" y="31"/><use href="#g50" x="370" y="31"/><use href="#g3" x="378" y="31"/><use href="#g18" x="390" y="31"/><use href="#g39" x="396" y="31"/><use href="#g15" x="402" y="31"/><use href="#g38" x="408" y="31"/><use href="#g9" x="414" y="31"/><use href="#g17" x="420" y="31"/><use href="#g22" x="430" y="31"/><use href="#g4" x="436" y="31"/><use href="#g0" x="442" y="31"/><use href="#g53" x="452" y="31"/><use href="#g37" x="458" y="31"/><use href="#g0" x="595" y="47"/><use href="#g1" x="601" y="47"/><use href="#g0" x="577" y="55"/><use href="#g22" x="583" y="55"/><use href="#g42" x="589" y="55"/><use href="#g2" x="595" y="55"/><use href="#g2" x="601" y="55"/><use href="#g0" x="595" y="79"/><use href="#g3" x="601" y="79"/><use href="#g0" x="577" y="87"/><use href="#g0" x="583" y="87"/><use href="#g0" x="589" y="87"/><use href="#g2" x="595" y="87"/><use href="#g2" x="601" y="87"/><use href="#g0" x="595" y="111"/><use href="#g2" x="601" y="111"/><use href="#g4" x="577" y="119"/><use href="#g1" x="583" y="119"/><use href="#g22" x="589" y="119"/><use href="#g2" x="595" y="119"/><use href="#g2" x="601" y="119"/><use href="#g4" x="595" y="143"/><use href="#g5" x="601" y="143"/><use href="#g4" x="577" y="151"/><use href="#g3" x="583" y="151"/><use href="#g1" x="589" y="151"/><use href="#g2" x="595" y="151"/><use href="#g2" x="601" y="151"/><use href="#g4" x="595" y="175"/><use href="#g0" x="601" y="175"/><use href="#g4" x="577" y="183"/><use href="#g4" x="583" y="183"/><use href="#g4" x="589" y="183"/><use href="#g2" x="595" y="183"/><use href="#g2" x="601" y="183"/><use href="#g1" x="601" y="207"/><use href="#g6" x="583" y="215"/><use href="#g3" x="589" y="215"/><use href="#g2" x="595" y="215"/><use href="#g2" x="601" y="215"/><use href="#g3" x="601" y="239"/><use href="#g7" x="583" y="247"/><use href="#g6" x="589" y="247"/><use href="#g2" x="595" y="247"/><use href="#g2" x="601" y="247"/><use href="#g54" x="582" y="263"/><use href="#g36" x="588" y="263"/><use href="#g16" x="594" y="263"/><use href="#g52" x="600" y="263"/><use href="#g54" x="569" y="271"/><use href="#g53" x="575" y="271"/><use href="#g37" x="582" y="271"/><use href="#g43" x="588" y="271"/><use href="#g16" x="595" y="271"/><use href="#g52" x="601" y="271"/><use href="#g57" x="320" y="271"/><use href="#g9" x="326" y="271"/><use href="#g16" x="332" y="271"/><use href="#g27" x="338" y="271"/><use href="#g21" x="344" y="271"/><use href="#g31" x="350" y="271"/><use href="#g60" x="356" y="271"/><use href="#g27" x="368" y="271"/><use href="#g10" x="374" y="271"/><use href="#g39" x="380" y="271"/><use href="#g15" x="386" y="271"/><use href="#g65" x="392" y="271"/><use href="#g17" x="404" y="271"/><use href="#g6" x="433" y="271"/><use href="#g6" x="439" y="271"/><use href="#g22" x="445" y="271"/><use href="#g62" x="457" y="271"/><use href="#g10" x="463" y="271"/><use href="#g14" x="469" y="271"/><use href="#g36" x="475" y="271"/><use href="#g6" x="505" y="271"/><use href="#g1" x="511" y="271"/><use href="#g6" x="517" y="271"/><use href="#g57" x="379" y="287"/><use href="#g9" x="385" y="287"/><use href="#g16" x="391" y="287"/><use href="#g27" x="397" y="287"/><use href="#g21" x="403" y="287"/><use href="#g31" x="409" y="287"/><use href="#g60" x="415" y="287"/><use href="#g9" x="427" y="287"/><use href="#g19" x="433" y="287"/><use href="#g27" x="439" y="287"/><use href="#g9" x="445" y="287"/><use href="#g31" x="451" y="287"/><use href="#g40" x="457" y="287"/><use href="#g9" x="463" y="287"/><use href="#g40" x="469" y="287"/><use href="#g36" x="481" y="287"/><use href="#g9" x="487" y="287"/><use href="#g36" x="493" y="287"/><use href="#g14" x="499" y="287"/><use href="#g10" x="505" y="287"/><use href="#g20" x="511" y="287"/><use href="#g12" x="517" y="287"/><use href="#g12" x="523" y="287"/><use href="#g12" x="529" y="287"/><use href="#g45" x="379" y="295"/><use href="#g9" x="385" y="295"/><use href="#g16" x="391" y="295"/><use href="#g32" x="397" y="295"/><use href="#g51" x="403" y="295"/><use href="#g27" x="409" y="295"/><use href="#g16" x="415" y="295"/><use href="#g27" x="427" y="295"/><use href="#g9" x="433" y="295"/><use href="#g16" x="439" y="295"/><use href="#g27" x="445" y="295"/><use href="#g21" x="451" y="295"/><use href="#g31" x="457" y="295"/><use href="#g60" x="463" y="295"/><use href="#g36" x="475" y="295"/><use href="#g9" x="481" y="295"/><use href="#g36" x="487" y="295"/><use href="#g14" x="493" y="295"/><use href="#g10" x="499" y="295"/><use href="#g20" x="505" y="295"/><use href="#g61" x="511" y="295"/><use href="#g27" x="517" y="295"/><use href="#g21" x="523" y="295"/><use href="#g36" x="529" y="295"/><use href="#g21" x="535" y="295"/><use href="#g31" x="541" y="295"/><use href="#g60" x="547" y="295"/><use href="#g54" x="588" y="295"/><use href="#g25" x="594" y="295"/><use href="#g37" x="600" y="295"/><use href="#g43" x="606" y="295"/><use href="#g16" x="612" y="295"/><use href="#g52" x="618" y="295"/><use href="#g30" x="379" y="303"/><use href="#g39" x="385" y="303"/><use href="#g27" x="391" y="303"/><use href="#g39" x="397" y="303"/><use href="#g15" x="406" y="303"/><use href="#g39" x="412" y="303"/><use href="#g15" x="418" y="303"/><use href="#g38" x="424" y="303"/><use href="#g9" x="430" y="303"/><use href="#g66" x="438" y="303"/><use href="#g4" x="444" y="303"/><use href="#g54" x="453" y="303"/><use href="#g4" x="471" y="303"/><use href="#g5" x="477" y="303"/><use href="#g53" x="489" y="303"/><use href="#g37" x="495" y="303"/><use href="#g52" x="501" y="303"/><use href="#g61" x="507" y="303"/><use href="#g4" x="522" y="303"/><use href="#g7" x="528" y="303"/><use href="#g2" x="534" y="303"/><use href="#g12" x="540" y="303"/><use href="#g2" x="546" y="303"/><use href="#g22" x="552" y="303"/><use href="#g25" x="562" y="303"/><use href="#g37" x="568" y="303"/><use href="#g43" x="574" y="303"/><use href="#g16" x="580" y="303"/><use href="#g30" x="379" y="311"/><use href="#g39" x="385" y="311"/><use href="#g27" x="391" y="311"/><use href="#g39" x="397" y="311"/><use href="#g15" x="406" y="311"/><use href="#g39" x="412" y="311"/><use href="#g15" x="418" y="311"/><use href="#g38" x="424" y="311"/><use href="#g9" x="430" y="311"/><use href="#g66" x="438" y="311"/><use href="#g0" x="444" y="311"/><use href="#g54" x="453" y="311"/><use href="#g0" x="466" y="311"/><use href="#g22" x="472" y="311"/><use href="#g5" x="478" y="311"/><use href="#g53" x="488" y="311"/><use href="#g37" x="494" y="311"/><use href="#g52" x="500" y="311"/><use href="#g61" x="506" y="311"/><use href="#g22" x="529" y="311"/><use href="#g6" x="535" y="311"/><use href="#g12" x="541" y="311"/><use href="#g7" x="547" y="311"/><use href="#g7" x="553" y="311"/><use href="#g25" x="562" y="311"/><use href="#g37" x="568" y="311"/><use href="#g43" x="574" y="311"/><use href="#g16" x="580" y="311"/><use href="#g7" x="604" y="311"/><use href="#g2" x="610" y="311"/><use href="#g2" x="616" y="311"/><use href="#g25" x="379" y="319"/><use href="#g9" x="385" y="319"/><use href="#g36" x="391" y="319"/><use href="#g14" x="397" y="319"/><use href="#g10" x="403" y="319"/><use href="#g20" x="409" y="319"/><use href="#g27" x="421" y="319"/><use href="#g38" x="427" y="319"/><use href="#g10" x="433" y="319"/><use href="#g14" x="439" y="319"/><use href="#g32" x="445" y="319"/><use href="#g60" x="451" y="319"/><use href="#g38" x="457" y="319"/><use href="#g33" x="463" y="319"/><use href="#g32" x="469" y="319"/><use href="#g27" x="475" y="319"/><use href="#g61" x="505" y="319"/><use href="#g0" x="529" y="319"/><use href="#g1" x="535" y="319"/><use href="#g12" x="541" y="319"/><use href="#g4" x="547" y="319"/><use href="#g0" x="553" y="319"/><use href="#g25" x="562" y="319"/><use href="#g37" x="568" y="319"/><use href="#g43" x="574" y="319"/><use href="#g16" x="580" y="319"/><use href="#g0" x="604" y="343"/><use href="#g3" x="610" y="343"/><use href="#g2" x="616" y="343"/><use href="#g4" x="603" y="375"/><use href="#g1" x="609" y="375"/><use href="#g2" x="615" y="375"/><use href="#g4" x="603" y="407"/><use href="#g0" x="609" y="407"/><use href="#g2" x="615" y="407"/><use href="#g5" x="610" y="439"/><use href="#g2" x="616" y="439"/><use href="#g45" x="541" y="351"/><use href="#g9" x="547" y="351"/><use href="#g39" x="553" y="351"/><use href="#g40" x="559" y="351"/><use href="#g21" x="565" y="351"/><use href="#g31" x="571" y="351"/><use href="#g60" x="577" y="351"/><use href="#g67" x="541" y="359"/><use href="#g10" x="547" y="359"/><use href="#g21" x="553" y="359"/><use href="#g27" x="559" y="359"/><use href="#g21" x="565" y="359"/><use href="#g31" x="571" y="359"/><use href="#g60" x="577" y="359"/><use href="#g25" x="541" y="367"/><use href="#g14" x="547" y="367"/><use href="#g55" x="553" y="367"/><use href="#g21" x="559" y="367"/><use href="#g31" x="565" y="367"/><use href="#g60" x="571" y="367"/><use href="#g3" x="382" y="471"/><use href="#g4" x="410" y="471"/><use href="#g5" x="416" y="471"/><use href="#g5" x="460" y="471"/><use href="#g3" x="466" y="471"/><use href="#g0" x="504" y="471"/><use href="#g22" x="511" y="471"/><use href="#g5" x="518" y="471"/><use href="#g4" x="550" y="471"/><use href="#g2" x="556" y="471"/><use href="#g0" x="562" y="471"/><use href="#g3" x="568" y="471"/><use href="#g3" x="598" y="471"/><use href="#g2" x="604" y="471"/><use href="#g42" x="610" y="471"/><use href="#g5" x="616" y="471"/><use href="#g22" x="31" y="327"/><use href="#g3" x="37" y="327"/><use href="#g12" x="43" y="327"/><use href="#g42" x="49" y="327"/><use href="#g22" x="55" y="327"/><use href="#g13" x="241" y="327"/><use href="#g10" x="247" y="327"/><use href="#g14" x="253" y="327"/><use href="#g15" x="259" y="327"/><use href="#g9" x="265" y="327"/><use href="#g16" x="271" y="327"/><use href="#g16" x="277" y="327"/><use href="#g14" x="283" y="327"/><use href="#g10" x="289" y="327"/><use href="#g68" x="301" y="327"/><use href="#g9" x="307" y="327"/><use href="#g31" x="313" y="327"/><use href="#g15" x="319" y="327"/><use href="#g38" x="325" y="327"/><use href="#g36" x="331" y="327"/><use href="#g39" x="337" y="327"/><use href="#g10" x="343" y="327"/><use href="#g65" x="349" y="327"/><use href="#g7" x="19" y="431"/><use href="#g5" x="25" y="431"/><use href="#g4" x="31" y="431"/><use href="#g12" x="37" y="431"/><use href="#g6" x="43" y="431"/><use href="#g0" x="49" y="431"/><use href="#g26" x="259" y="431"/><use href="#g39" x="265" y="431"/><use href="#g10" x="271" y="431"/><use href="#g40" x="277" y="431"/><use href="#g40" x="289" y="431"/><use href="#g10" x="295" y="431"/><use href="#g21" x="301" y="431"/><use href="#g55" x="307" y="431"/><use href="#g9" x="313" y="431"/><use href="#g16" x="325" y="431"/><use href="#g33" x="331" y="431"/><use href="#g9" x="337" y="431"/><use href="#g9" x="343" y="431"/><use href="#g40" x="349" y="431"/></g>
<g fill="#AA1C1C" shape-rendering="crispEdges"><use href="#g45" x="19" y="135"/><use href="#g57" x="25" y="135"/><use href="#g18" x="31" y="135"/><use href="#g43" x="37" y="135"/><use href="#g37" x="43" y="135"/><use href="#g29" x="49" y="135"/><use href="#g59" x="55" y="135"/><use href="#g44" x="61" y="135"/><use href="#g35" x="73" y="135"/><use href="#g9" x="79" y="135"/><use href="#g39" x="85" y="135"/><use href="#g10" x="91" y="135"/><use href="#g0" x="97" y="135"/><use href="#g2" x="103" y="135"/><use href="#g2" x="109" y="135"/><use href="#g2" x="115" y="135"/><use href="#g37" x="127" y="135"/><use href="#g32" x="133" y="135"/><use href="#g60" x="139" y="135"/><use href="#g17" x="145" y="135"/></g>
<g fill="#F8F880" shape-rendering="crispEdges"><use href="#g56" x="561" y="23"/><use href="#g50" x="567" y="23"/><use href="#g44" x="573" y="23"/><use href="#g57" x="579" y="23"/><use href="#g57" x="589" y="23"/><use href="#g47" x="595" y="23"/><use href="#g44" x="601" y="23"/><use href="#g57" x="607" y="23"/></g>
<g fill="#F06868" shape-rendering="crispEdges"><use href="#g50" x="319" y="39"/><use href="#g55" x="325" y="39"/><use href="#g9" x="331" y="39"/><use href="#g10" x="337" y="39"/><use href="#g39" x="343" y="39"/><use href="#g60" x="349" y="39"/><use href="#g9" x="355" y="39"/><use href="#g43" x="361" y="39"/><use href="#g25" x="367" y="39"/><use href="#g39" x="373" y="39"/><use href="#g19" x="379" y="39"/><use href="#g16" x="391" y="39"/><use href="#g9" x="397" y="39"/><use href="#g9" x="403" y="39"/><use href="#g65" x="409" y="39"/><use href="#g27" x="421" y="39"/><use href="#g21" x="427" y="39"/><use href="#g36" x="433" y="39"/><use href="#g9" x="439" y="39"/><use href="#g17" x="458" y="39"/><use href="#g42" x="484" y="39"/><use href="#g12" x="490" y="39"/><use href="#g7" x="496" y="39"/><use href="#g0" x="502" y="39"/><use href="#g43" x="512" y="39"/><use href="#g4" x="522" y="39"/><use href="#g3" x="528" y="39"/><use href="#g12" x="534" y="39"/><use href="#g1" x="540" y="39"/><use href="#g3" x="546" y="39"/><use href="#g36" x="556" y="39"/><use href="#g16" x="562" y="39"/></g>
<g fill="#F078F0" shape-rendering="crispEdges"><use href="#g45" x="319" y="47"/><use href="#g39" x="325" y="47"/><use href="#g31" x="331" y="47"/><use href="#g40" x="337" y="47"/><use href="#g14" x="343" y="47"/><use href="#g36" x="349" y="47"/><use href="#g16" x="361" y="47"/><use href="#g9" x="367" y="47"/><use href="#g9" x="373" y="47"/><use href="#g65" x="379" y="47"/><use href="#g27" x="391" y="47"/><use href="#g21" x="397" y="47"/><use href="#g36" x="403" y="47"/><use href="#g9" x="409" y="47"/><use href="#g17" x="458" y="47"/><use href="#g1" x="484" y="47"/><use href="#g12" x="490" y="47"/><use href="#g0" x="496" y="47"/><use href="#g4" x="502" y="47"/><use href="#g36" x="511" y="47"/><use href="#g16" x="517" y="47"/><use href="#g37" x="319" y="71"/><use href="#g32" x="325" y="71"/><use href="#g62" x="331" y="71"/><use href="#g62" x="337" y="71"/><use href="#g9" x="343" y="71"/><use href="#g10" x="349" y="71"/><use href="#g9" x="355" y="71"/><use href="#g40" x="361" y="71"/><use href="#g10" x="373" y="71"/><use href="#g9" x="379" y="71"/><use href="#g39" x="385" y="71"/><use href="#g40" x="391" y="71"/><use href="#g16" x="403" y="71"/><use href="#g33" x="409" y="71"/><use href="#g9" x="415" y="71"/><use href="#g9" x="421" y="71"/><use href="#g40" x="427" y="71"/><use href="#g17" x="458" y="71"/><use href="#g5" x="484" y="71"/><use href="#g2" x="490" y="71"/><use href="#g7" x="496" y="71"/><use href="#g4" x="502" y="71"/><use href="#g53" x="511" y="71"/><use href="#g37" x="517" y="71"/><use href="#g43" x="523" y="71"/><use href="#g16" x="529" y="71"/></g>
<g fill="#40B040" shape-rendering="crispEdges"><use href="#g57" x="319" y="55"/><use href="#g10" x="325" y="55"/><use href="#g39" x="331" y="55"/><use href="#g15" x="337" y="55"/><use href="#g65" x="343" y="55"/><use href="#g61" x="349" y="55"/><use href="#g27" x="355" y="55"/><use href="#g14" x="361" y="55"/><use href="#g61" x="367" y="55"/><use href="#g27" x="373" y="55"/><use href="#g10" x="379" y="55"/><use href="#g39" x="385" y="55"/><use href="#g15" x="391" y="55"/><use href="#g65" x="397" y="55"/><use href="#g16" x="409" y="55"/><use href="#g9" x="415" y="55"/><use href="#g9" x="421" y="55"/><use href="#g65" x="427" y="55"/><use href="#g17" x="458" y="55"/><use href="#g4" x="483" y="55"/><use href="#g12" x="489" y="55"/><use href="#g42" x="495" y="55"/><use href="#g2" x="501" y="55"/><use href="#g36" x="511" y="55"/><use href="#g16" x="517" y="55"/></g>
<g fill="#6060F0" shape-rendering="crispEdges"><use href="#g45" x="319" y="63"/><use href="#g39" x="325" y="63"/><use href="#g31" x="331" y="63"/><use href="#g40" x="337" y="63"/><use href="#g14" x="343" y="63"/><use href="#g36" x="349" y="63"/><use href="#g39" x="361" y="63"/><use href="#g15" x="367" y="63"/><use href="#g15" x="373" y="63"/><use href="#g9" x="379" y="63"/><use href="#g16" x="385" y="63"/><use href="#g16" x="391" y="63"/><use href="#g27" x="403" y="63"/><use href="#g21" x="409" y="63"/><use href="#g36" x="415" y="63"/><use href="#g9" x="421" y="63"/><use href="#g17" x="458" y="63"/><use href="#g4" x="477" y="63"/><use href="#g22" x="483" y="63"/><use href="#g12" x="489" y="63"/><use href="#g22" x="495" y="63"/><use href="#g22" x="501" y="63"/><use href="#g36" x="511" y="63"/><use href="#g16" x="517" y="63"/></g>
<g fill="#B86A38" shape-rendering="crispEdges"><use href="#g66" x="319" y="79"/><use href="#g21" x="325" y="79"/><use href="#g31" x="331" y="79"/><use href="#g9" x="337" y="79"/><use href="#g39" x="343" y="79"/><use href="#g10" x="349" y="79"/><use href="#g55" x="361" y="79"/><use href="#g9" x="367" y="79"/><use href="#g10" x="373" y="79"/><use href="#g21" x="379" y="79"/><use href="#g62" x="385" y="79"/><use href="#g20" x="391" y="79"/><use href="#g16" x="403" y="79"/><use href="#g33" x="409" y="79"/><use href="#g9" x="415" y="79"/><use href="#g9" x="421" y="79"/><use href="#g40" x="427" y="79"/><use href="#g17" x="458" y="79"/><use href="#g4" x="477" y="79"/><use href="#g5" x="483" y="79"/><use href="#g0" x="489" y="79"/><use href="#g0" x="495" y="79"/><use href="#g3" x="501" y="79"/><use href="#g53" x="511" y="79"/><use href="#g37" x="517" y="79"/><use href="#g43" x="523" y="79"/><use href="#g16" x="529" y="79"/></g>
<g fill="#F8F8A0" shape-rendering="crispEdges"><use href="#g66" x="319" y="87"/><use href="#g21" x="325" y="87"/><use href="#g31" x="331" y="87"/><use href="#g9" x="337" y="87"/><use href="#g39" x="343" y="87"/><use href="#g10" x="349" y="87"/><use href="#g10" x="361" y="87"/><use href="#g9" x="367" y="87"/><use href="#g39" x="373" y="87"/><use href="#g40" x="379" y="87"/><use href="#g16" x="391" y="87"/><use href="#g33" x="397" y="87"/><use href="#g9" x="403" y="87"/><use href="#g9" x="409" y="87"/><use href="#g40" x="415" y="87"/><use href="#g17" x="458" y="87"/><use href="#g22" x="484" y="87"/><use href="#g3" x="490" y="87"/><use href="#g4" x="496" y="87"/><use href="#g6" x="502" y="87"/><use href="#g53" x="511" y="87"/><use href="#g37" x="517" y="87"/><use href="#g43" x="523" y="87"/><use href="#g16" x="529" y="87"/></g>
<g fill="#70E070" shape-rendering="crispEdges"><use href="#g13" x="577" y="287"/><use href="#g50" x="583" y="287"/><use href="#g44" x="589" y="287"/><use href="#g44" x="595" y="287"/><use href="#g47" x="601" y="287"/><use href="#g30" x="607" y="287"/></g>
</svg></body></html>
